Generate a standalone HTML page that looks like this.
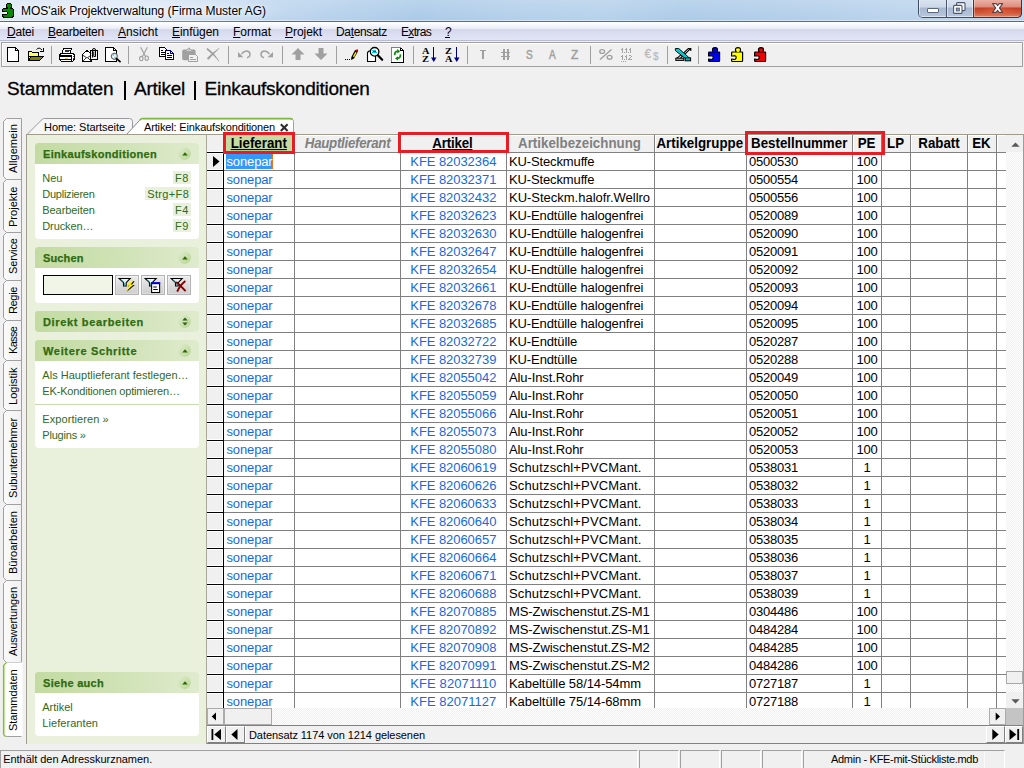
<!DOCTYPE html>
<html><head><meta charset="utf-8"><title>MOS'aik Projektverwaltung</title>
<style>
*{box-sizing:border-box;margin:0;padding:0}
html,body{width:1024px;height:768px;overflow:hidden;background:#f0f0f0;font-family:"Liberation Sans",sans-serif;}
#app{position:absolute;left:0;top:0;width:1024px;height:768px;overflow:hidden;background:#f0f0f0}
.a{position:absolute}
.t{position:absolute;white-space:pre;}
svg{position:absolute;overflow:visible}
u{text-decoration:underline;text-underline-offset:1px}
</style></head><body><div id="app">

<div class="a" style="left:0;top:0;width:1024px;height:21px;background:linear-gradient(90deg,#dde8f5 0px,#d3e2f3 100px,#c2d8ef 240px,#b6d1ec 330px,#aacae8 420px,#b3cfea 520px,#b5d1eb 600px,#accbe8 680px,#b2ceea 800px,#b9d3ec 900px,#bcd5ed 1024px)"></div>
<div class="a" style="left:0;top:0;width:1024px;height:21px;background:linear-gradient(180deg,rgba(255,255,255,.18) 0,rgba(255,255,255,0) 100%)"></div>
<div class="a" style="left:0;top:21px;width:1024px;height:1px;background:#5e6a7d"></div>
<div class="a" style="left:-10px;top:-6px;width:300px;height:34px;background:radial-gradient(ellipse 150px 17px at 50% 50%,rgba(255,255,255,.42) 0,rgba(255,255,255,.3) 50%,rgba(255,255,255,0) 100%)"></div>
<span class="t" style="left:21px;top:4.84px;font-size:12px;line-height:12px;color:#000;letter-spacing:-0.016px;text-shadow:0 0 3px rgba(255,255,255,.9),0 0 6px rgba(255,255,255,.7);">MOS'aik Projektverwaltung (Firma Muster AG)</span>
<div class="a" style="left:918px;top:-1px;width:104px;height:19px;border:1px solid #414d61;border-top:none;border-radius:0 0 5px 5px;overflow:hidden;background:#b9c9dd">
<div class="a" style="left:0;top:0;width:27px;height:18px;background:linear-gradient(180deg,#dbe4f0 0,#ccd8e8 8px,#a6b8d1 9px,#b7c7dc 18px);box-shadow:inset 1px -1px 0 0 rgba(255,255,255,.5)"></div>
<div class="a" style="left:27px;top:0;width:1px;height:18px;background:#4a566c"></div>
<div class="a" style="left:28px;top:0;width:26px;height:18px;background:linear-gradient(180deg,#dbe4f0 0,#ccd8e8 8px,#a6b8d1 9px,#b7c7dc 18px);box-shadow:inset 1px -1px 0 0 rgba(255,255,255,.5),inset -1px 0 0 0 rgba(255,255,255,.5)"></div>
<div class="a" style="left:54px;top:0;width:1px;height:18px;background:#5a2c2a"></div>
<div class="a" style="left:55px;top:0;width:48px;height:18px;background:linear-gradient(180deg,#ecb6aa 0,#de8c7c 8px,#c23e24 9px,#d0583a 14px,#dc8468 18px);box-shadow:inset 1px -1px 0 0 rgba(255,255,255,.35),inset -1px 0 0 0 rgba(255,255,255,.35)"></div>
<div class="a" style="left:55px;top:9px;width:48px;height:9px;background:radial-gradient(ellipse 18px 7px at 50% 40%,rgba(240,110,70,.55) 0,rgba(240,110,70,0) 100%)"></div>
</div>
<div class="a" style="left:973px;top:-1px;width:49px;height:19px;border:1px solid #5e2a26;border-top:none;border-radius:0 0 5px 0"></div>
<div class="a" style="left:927px;top:8px;width:12px;height:5px;background:#fff;border:1px solid #5b677c;border-radius:1px"></div>
<svg style="left:953px;top:2px" width="13" height="12" viewBox="0 0 13 12"><rect x="3.6" y="0.6" width="8.4" height="8" rx="1" fill="#f4f7fb" stroke="#4a566e" stroke-width="1.1"/><rect x="0.6" y="3.4" width="8.4" height="8" rx="1" fill="#fff" stroke="#4a566e" stroke-width="1.1"/><rect x="3.3" y="6.1" width="3" height="2.8" fill="#93a6c2" stroke="#4a566e" stroke-width=".9"/></svg>
<svg style="left:992px;top:3px" width="11.2" height="10" viewBox="0 0 13 10" preserveAspectRatio="none"><path d="M0.6 0.6 L4.8 0.6 L6.5 2.7 L8.2 0.6 L12.4 0.6 L8.7 5 L12.4 9.4 L8.2 9.4 L6.5 7.3 L4.8 9.4 L0.6 9.4 L4.3 5 Z" fill="#fff" stroke="#5d4346" stroke-width="1.2" stroke-linejoin="round"/></svg>
<svg style="left:2px;top:3px" width="12" height="15" viewBox="0 0 12 15" shape-rendering="crispEdges"><rect x="5" y="0" width="4" height="1" fill="#000"/><rect x="4" y="1" width="1" height="1" fill="#000"/><rect x="5" y="1" width="4" height="1" fill="#008a00"/><rect x="9" y="1" width="1" height="1" fill="#000"/><rect x="4" y="2" width="1" height="1" fill="#000"/><rect x="5" y="2" width="4" height="1" fill="#008a00"/><rect x="9" y="2" width="1" height="1" fill="#000"/><rect x="4" y="3" width="1" height="1" fill="#000"/><rect x="5" y="3" width="4" height="1" fill="#008a00"/><rect x="9" y="3" width="1" height="1" fill="#000"/><rect x="4" y="4" width="2" height="1" fill="#000"/><rect x="6" y="4" width="2" height="1" fill="#008a00"/><rect x="8" y="4" width="2" height="1" fill="#000"/><rect x="1" y="5" width="5" height="1" fill="#000"/><rect x="6" y="5" width="2" height="1" fill="#008a00"/><rect x="8" y="5" width="3" height="1" fill="#000"/><rect x="0" y="6" width="1" height="1" fill="#000"/><rect x="1" y="6" width="10" height="1" fill="#008a00"/><rect x="11" y="6" width="1" height="1" fill="#000"/><rect x="0" y="7" width="1" height="1" fill="#000"/><rect x="1" y="7" width="10" height="1" fill="#008a00"/><rect x="11" y="7" width="1" height="1" fill="#000"/><rect x="0" y="8" width="5" height="1" fill="#000"/><rect x="5" y="8" width="6" height="1" fill="#008a00"/><rect x="11" y="8" width="1" height="1" fill="#000"/><rect x="2" y="9" width="3" height="1" fill="#f4f8fc"/><rect x="5" y="9" width="1" height="1" fill="#000"/><rect x="6" y="9" width="5" height="1" fill="#008a00"/><rect x="11" y="9" width="1" height="1" fill="#000"/><rect x="2" y="10" width="3" height="1" fill="#f4f8fc"/><rect x="5" y="10" width="1" height="1" fill="#000"/><rect x="6" y="10" width="5" height="1" fill="#008a00"/><rect x="11" y="10" width="1" height="1" fill="#000"/><rect x="0" y="11" width="5" height="1" fill="#000"/><rect x="5" y="11" width="6" height="1" fill="#008a00"/><rect x="11" y="11" width="1" height="1" fill="#000"/><rect x="0" y="12" width="1" height="1" fill="#000"/><rect x="1" y="12" width="10" height="1" fill="#008a00"/><rect x="11" y="12" width="1" height="1" fill="#000"/><rect x="0" y="13" width="2" height="1" fill="#000"/><rect x="2" y="13" width="8" height="1" fill="#008a00"/><rect x="10" y="13" width="2" height="1" fill="#000"/><rect x="1" y="14" width="10" height="1" fill="#000"/></svg>
<div class="a" style="left:0;top:20px;width:1024px;height:1px;background:rgba(255,255,255,.45)"></div>
<div class="a" style="left:0;top:22px;width:1024px;height:7px;background:linear-gradient(180deg,#ffffff 0,#fafbfe 2px,#e9ebf6 7px)"></div>
<div class="a" style="left:0;top:29px;width:1024px;height:11px;background:linear-gradient(180deg,#d5d8ec 0,#e1e5f5 11px)"></div>
<div class="a" style="left:0;top:40px;width:1024px;height:1px;background:#b8bccf"></div>
<div class="a" style="left:0;top:41px;width:1024px;height:1px;background:#f0f0f0"></div>
<span class="t" style="left:7px;top:25.84px;font-size:12px;line-height:12px;color:#000;letter-spacing:-0.206px;"><u>D</u>atei</span>
<span class="t" style="left:48px;top:25.84px;font-size:12px;line-height:12px;color:#000;letter-spacing:-0.206px;"><u>B</u>earbeiten</span>
<span class="t" style="left:118px;top:25.84px;font-size:12px;line-height:12px;color:#000;letter-spacing:0.089px;"><u>A</u>nsicht</span>
<span class="t" style="left:172px;top:25.84px;font-size:12px;line-height:12px;color:#000;letter-spacing:-0.049px;"><u>E</u>infügen</span>
<span class="t" style="left:233px;top:25.84px;font-size:12px;line-height:12px;color:#000;letter-spacing:-0.005px;"><u>F</u>ormat</span>
<span class="t" style="left:285px;top:25.84px;font-size:12px;line-height:12px;color:#000;letter-spacing:-0.051px;"><u>P</u>rojekt</span>
<span class="t" style="left:336px;top:25.84px;font-size:12px;line-height:12px;color:#000;letter-spacing:-0.339px;">Da<u>t</u>ensatz</span>
<span class="t" style="left:401px;top:25.84px;font-size:12px;line-height:12px;color:#000;letter-spacing:-0.672px;">E<u>x</u>tras</span>
<span class="t" style="left:445px;top:25.84px;font-size:12px;line-height:12px;color:#000;letter-spacing:-1.688px;"><u>?</u></span>
<div class="a" style="left:1px;top:42px;width:1022px;height:25px;border:1px solid #a0a0a0;background:#f0f0f0"></div>
<div class="a" style="left:2px;top:43px;width:1020px;height:1px;background:#fff"></div>
<div class="a" style="left:2px;top:43px;width:1px;height:23px;background:#fff"></div>
<!--TOOLBAR_ICONS-->
<div class="a" style="left:51px;top:46px;width:1px;height:18px;background:#a0a0a0"></div>
<div class="a" style="left:128px;top:46px;width:1px;height:18px;background:#a0a0a0"></div>
<div class="a" style="left:228px;top:46px;width:1px;height:18px;background:#a0a0a0"></div>
<div class="a" style="left:282px;top:46px;width:1px;height:18px;background:#a0a0a0"></div>
<div class="a" style="left:336px;top:46px;width:1px;height:18px;background:#a0a0a0"></div>
<div class="a" style="left:413px;top:46px;width:1px;height:18px;background:#a0a0a0"></div>
<div class="a" style="left:467px;top:46px;width:1px;height:18px;background:#a0a0a0"></div>
<div class="a" style="left:590px;top:46px;width:1px;height:18px;background:#a0a0a0"></div>
<div class="a" style="left:667px;top:46px;width:1px;height:18px;background:#a0a0a0"></div>
<div class="a" style="left:698px;top:46px;width:1px;height:18px;background:#a0a0a0"></div>
<span class="t" style="left:7px;top:78.92px;font-size:19px;line-height:19px;color:#000;letter-spacing:-0.123px;-webkit-text-stroke:0.3px #000;">Stammdaten</span>
<div class="a" style="left:124px;top:81px;width:2px;height:19px;background:#000"></div>
<span class="t" style="left:134px;top:78.92px;font-size:19px;line-height:19px;color:#000;letter-spacing:-0.257px;-webkit-text-stroke:0.3px #000;">Artikel</span>
<div class="a" style="left:194px;top:81px;width:2px;height:19px;background:#000"></div>
<span class="t" style="left:204.6px;top:78.92px;font-size:19px;line-height:19px;color:#000;letter-spacing:-0.267px;-webkit-text-stroke:0.3px #000;">Einkaufskonditionen</span>
<svg style="left:0;top:0" width="30" height="768" viewBox="0 0 30 768"><defs><linearGradient id="vtg" x1="0" x2="1" y1="0" y2="0"><stop offset="0" stop-color="#fafafa"/><stop offset="1" stop-color="#f1f1f1"/></linearGradient></defs><path d="M6.5 118.5 H21.5 V179.5 H6.5 L3.5 176.5 V121.5 Z" fill="url(#vtg)" stroke="#a0a0a0" stroke-width="1"/><path d="M6.5 179.5 H21.5 V232.5 H6.5 L3.5 229.5 V182.5 Z" fill="url(#vtg)" stroke="#a0a0a0" stroke-width="1"/><path d="M6.5 232.5 H21.5 V280.5 H6.5 L3.5 277.5 V235.5 Z" fill="url(#vtg)" stroke="#a0a0a0" stroke-width="1"/><path d="M6.5 280.5 H21.5 V320.5 H6.5 L3.5 317.5 V283.5 Z" fill="url(#vtg)" stroke="#a0a0a0" stroke-width="1"/><path d="M6.5 320.5 H21.5 V360.5 H6.5 L3.5 357.5 V323.5 Z" fill="url(#vtg)" stroke="#a0a0a0" stroke-width="1"/><path d="M6.5 360.5 H21.5 V410.5 H6.5 L3.5 407.5 V363.5 Z" fill="url(#vtg)" stroke="#a0a0a0" stroke-width="1"/><path d="M6.5 410.5 H21.5 V504.5 H6.5 L3.5 501.5 V413.5 Z" fill="url(#vtg)" stroke="#a0a0a0" stroke-width="1"/><path d="M6.5 504.5 H21.5 V580.5 H6.5 L3.5 577.5 V507.5 Z" fill="url(#vtg)" stroke="#a0a0a0" stroke-width="1"/><path d="M6.5 580.5 H21.5 V662.5 H6.5 L3.5 659.5 V583.5 Z" fill="url(#vtg)" stroke="#a0a0a0" stroke-width="1"/><path d="M22.5 662.5 H6.5 L3.5 665.5 V734 Q3.5 736.5 6.5 736.5 H22.5 Z" fill="#fff" stroke="none"/><path d="M6.5 662.5 L3.5 665.5 V733.5 Q3.5 736 6.5 736.5" fill="none" stroke="#86bf3c" stroke-width="1.2"/><path d="M4.6 665 V734" fill="none" stroke="#c4e09c" stroke-width="1.2"/><path d="M6.5 736.5 H21.5" fill="none" stroke="#a0a0a0" stroke-width="1"/></svg>
<span class="t" style="left:7.7px;top:173px;font-size:11px;line-height:11px;color:#000;transform-origin:0 0;transform:rotate(-90deg);letter-spacing:0.076px;">Allgemein</span>
<span class="t" style="left:7.7px;top:226.5px;font-size:11px;line-height:11px;color:#000;transform-origin:0 0;transform:rotate(-90deg);letter-spacing:0.018px;">Projekte</span>
<span class="t" style="left:7.7px;top:274.3px;font-size:11px;line-height:11px;color:#000;transform-origin:0 0;transform:rotate(-90deg);letter-spacing:-0.127px;">Service</span>
<span class="t" style="left:7.7px;top:314px;font-size:11px;line-height:11px;color:#000;transform-origin:0 0;transform:rotate(-90deg);letter-spacing:-0.350px;">Regie</span>
<span class="t" style="left:7.7px;top:354.4px;font-size:11px;line-height:11px;color:#000;transform-origin:0 0;transform:rotate(-90deg);letter-spacing:-0.676px;">Kasse</span>
<span class="t" style="left:7.7px;top:405px;font-size:11px;line-height:11px;color:#000;transform-origin:0 0;transform:rotate(-90deg);letter-spacing:0.025px;">Logistik</span>
<span class="t" style="left:7.7px;top:498px;font-size:11px;line-height:11px;color:#000;transform-origin:0 0;transform:rotate(-90deg);letter-spacing:-0.140px;">Subunternehmer</span>
<span class="t" style="left:7.7px;top:574px;font-size:11px;line-height:11px;color:#000;transform-origin:0 0;transform:rotate(-90deg);letter-spacing:0.000px;">Büroarbeiten</span>
<span class="t" style="left:7.7px;top:656px;font-size:11px;line-height:11px;color:#000;transform-origin:0 0;transform:rotate(-90deg);letter-spacing:-0.111px;">Auswertungen</span>
<span class="t" style="left:7.7px;top:730.5px;font-size:11px;line-height:11px;color:#000;transform-origin:0 0;transform:rotate(-90deg);letter-spacing:-0.087px;">Stammdaten</span>
<div class="a" style="left:26px;top:134px;width:1px;height:610px;background:#a09d8e"></div>
<svg style="left:0;top:0" width="1024" height="140" viewBox="0 0 1024 140">
<path d="M27 134.5 L42.5 119 Q43 118.5 44.5 118.5 L129.5 118.5 Q132.5 118.5 132.5 121.5 L132.5 134.5 Z" fill="#f6f6f6" stroke="none"/>
<path d="M27 134.5 L42.5 119 Q43 118.5 44.5 118.5 L129.5 118.5 Q132.5 118.5 132.5 121.5 L132.5 128" fill="none" stroke="#9a9a9a" stroke-width="1"/>
<path d="M126.5 134.5 L140.5 119.5 Q141.5 118.5 143 118.5 L290 118.5 Q293.5 118.5 293.5 121.5 L293.5 134.5 Z" fill="#fff" stroke="none"/>
<path d="M143 119.5 H292.5" stroke="#cfe3b5" stroke-width="1"/>
<path d="M126.5 134.5 L139.5 120.5" fill="none" stroke="#8a8a8a" stroke-width="1"/>
<path d="M293.5 134 V121.5 Q293.5 119.6 291.8 118.9" fill="none" stroke="#a0a0a0" stroke-width="1"/>
<path d="M139.3 120.7 Q140.8 118.5 143 118.5 L290 118.5 Q292 118.5 292.6 119.4" fill="none" stroke="#7fb640" stroke-width="1.3"/>
<path d="M280.8 124.2 L287.6 131 M287.6 124.2 L280.8 131" stroke="#2c2c2c" stroke-width="2"/>
</svg>
<div class="a" style="left:26px;top:134px;width:998px;height:1px;background:#9f9c8c"></div>
<span class="t" style="left:44px;top:121.69px;font-size:11px;line-height:11px;color:#000;letter-spacing:-0.058px;">Home: Startseite</span>
<span class="t" style="left:144px;top:121.69px;font-size:11px;line-height:11px;color:#000;letter-spacing:-0.148px;">Artikel: Einkaufskonditionen</span>
<div class="a" style="left:27px;top:135px;width:180px;height:609px;background:#e9f1dd"></div>
<div class="a" style="left:35px;top:143px;width:164px;height:96px;background:#fff;border-radius:3px 3px 4px 4px"></div>
<div class="a" style="left:35px;top:143px;width:164px;height:21px;background:linear-gradient(90deg,#c3dba2 0,#cfe2b5 50%,#dfebcd 100%);border-radius:3px 3px 0 0"></div>
<span class="t" style="left:43px;top:149.19px;font-size:11px;line-height:11px;color:#2f6b12;font-weight:bold;letter-spacing:0.306px;-webkit-text-stroke:0.25px #2f6b12;">Einkaufskonditionen</span>
<div class="a" style="left:178.0px;top:147.0px;width:13px;height:13px;border-radius:50%;background:linear-gradient(135deg,#e0edd0 0,#cfe3b6 40%,#b7d493 100%)"></div>
<svg style="left:181.5px;top:151.5px" width="6" height="4" viewBox="0 0 6 4"><path d="M0.2 3.5 L3 0.2 L5.8 3.5 Z" fill="#2a6a00"/></svg>
<span class="t" style="left:42.3px;top:172.69px;font-size:11px;line-height:11px;color:#2f6a25;letter-spacing:-0.062px;">Neu</span>
<div class="a" style="left:173px;top:171px;width:18px;height:13px;background:#e9f1dd"></div>
<span class="t" style="left:175px;top:172.69px;font-size:11px;line-height:11px;color:#2f6a25;letter-spacing:0.578px;">F8</span>
<span class="t" style="left:42.3px;top:188.69px;font-size:11px;line-height:11px;color:#2f6a25;letter-spacing:-0.248px;">Duplizieren</span>
<div class="a" style="left:145px;top:187px;width:46px;height:13px;background:#e9f1dd"></div>
<span class="t" style="left:147.2px;top:188.69px;font-size:11px;line-height:11px;color:#2f6a25;letter-spacing:0.366px;">Strg+F8</span>
<span class="t" style="left:42.3px;top:204.69px;font-size:11px;line-height:11px;color:#2f6a25;letter-spacing:-0.072px;">Bearbeiten</span>
<div class="a" style="left:173px;top:203px;width:18px;height:13px;background:#e9f1dd"></div>
<span class="t" style="left:175px;top:204.69px;font-size:11px;line-height:11px;color:#2f6a25;letter-spacing:0.578px;">F4</span>
<span class="t" style="left:42.3px;top:220.69px;font-size:11px;line-height:11px;color:#2f6a25;letter-spacing:-0.121px;">Drucken…</span>
<div class="a" style="left:173px;top:219px;width:18px;height:13px;background:#e9f1dd"></div>
<span class="t" style="left:175px;top:220.69px;font-size:11px;line-height:11px;color:#2f6a25;letter-spacing:0.578px;">F9</span>
<div class="a" style="left:35px;top:247px;width:164px;height:56px;background:#fff;border-radius:3px 3px 4px 4px"></div>
<div class="a" style="left:35px;top:247px;width:164px;height:21px;background:linear-gradient(90deg,#c3dba2 0,#cfe2b5 50%,#dfebcd 100%);border-radius:3px 3px 0 0"></div>
<span class="t" style="left:43px;top:253.19px;font-size:11px;line-height:11px;color:#2f6b12;font-weight:bold;letter-spacing:0.128px;-webkit-text-stroke:0.25px #2f6b12;">Suchen</span>
<div class="a" style="left:178.0px;top:251.0px;width:13px;height:13px;border-radius:50%;background:linear-gradient(135deg,#e0edd0 0,#cfe3b6 40%,#b7d493 100%)"></div>
<svg style="left:181.5px;top:255.5px" width="6" height="4" viewBox="0 0 6 4"><path d="M0.2 3.5 L3 0.2 L5.8 3.5 Z" fill="#2a6a00"/></svg>
<div class="a" style="left:43px;top:275px;width:70px;height:20px;background:#f0f5e8;border:1px solid #000"></div>
<div class="a" style="left:115px;top:275px;width:24px;height:20px;background:linear-gradient(180deg,#ececec 0,#dcdcdc 50%,#cecece 100%);border:1px solid #b4b4b4;box-shadow:inset 0 0 0 1px rgba(255,255,255,.25)"></div>
<div class="a" style="left:141px;top:275px;width:24px;height:20px;background:linear-gradient(180deg,#ececec 0,#dcdcdc 50%,#cecece 100%);border:1px solid #b4b4b4;box-shadow:inset 0 0 0 1px rgba(255,255,255,.25)"></div>
<div class="a" style="left:167px;top:275px;width:24px;height:20px;background:linear-gradient(180deg,#ececec 0,#dcdcdc 50%,#cecece 100%);border:1px solid #b4b4b4;box-shadow:inset 0 0 0 1px rgba(255,255,255,.25)"></div>
<!--FILTER_ICONS-->
<div class="a" style="left:35px;top:311px;width:164px;height:21px;background:linear-gradient(90deg,#c3dba2 0,#cfe2b5 50%,#dfebcd 100%);border-radius:3px 3px 4px 4px"></div>
<span class="t" style="left:43px;top:317.19px;font-size:11px;line-height:11px;color:#2f6b12;font-weight:bold;letter-spacing:0.654px;-webkit-text-stroke:0.25px #2f6b12;">Direkt bearbeiten</span>
<div class="a" style="left:178.0px;top:315.0px;width:13px;height:13px;border-radius:50%;background:linear-gradient(135deg,#e0edd0 0,#cfe3b6 40%,#b7d493 100%)"></div>
<svg style="left:181.5px;top:317.0px" width="6" height="9" viewBox="0 0 6 9"><path d="M0.3 3.6 L3 0.6 L5.7 3.6 Z M0.3 5.4 L3 8.4 L5.7 5.4 Z" fill="#2e6314"/></svg>
<div class="a" style="left:35px;top:340px;width:164px;height:108px;background:#fff;border-radius:3px 3px 4px 4px"></div>
<div class="a" style="left:35px;top:340px;width:164px;height:21px;background:linear-gradient(90deg,#c3dba2 0,#cfe2b5 50%,#dfebcd 100%);border-radius:3px 3px 0 0"></div>
<span class="t" style="left:43px;top:346.19px;font-size:11px;line-height:11px;color:#2f6b12;font-weight:bold;letter-spacing:0.665px;-webkit-text-stroke:0.25px #2f6b12;">Weitere Schritte</span>
<div class="a" style="left:178.0px;top:344.0px;width:13px;height:13px;border-radius:50%;background:linear-gradient(135deg,#e0edd0 0,#cfe3b6 40%,#b7d493 100%)"></div>
<svg style="left:181.5px;top:348.5px" width="6" height="4" viewBox="0 0 6 4"><path d="M0.2 3.5 L3 0.2 L5.8 3.5 Z" fill="#2a6a00"/></svg>
<span class="t" style="left:42.3px;top:369.69px;font-size:11px;line-height:11px;color:#2f6a25;letter-spacing:0.027px;">Als Hauptlieferant festlegen…</span>
<span class="t" style="left:42.3px;top:385.69px;font-size:11px;line-height:11px;color:#2f6a25;letter-spacing:-0.168px;">EK-Konditionen optimieren…</span>
<div class="a" style="left:35px;top:404px;width:164px;height:1px;background:#c8ddb0"></div>
<span class="t" style="left:42.3px;top:413.69px;font-size:11px;line-height:11px;color:#2f6a25;letter-spacing:0.082px;">Exportieren »</span>
<span class="t" style="left:42.3px;top:429.69px;font-size:11px;line-height:11px;color:#2f6a25;letter-spacing:-0.196px;">Plugins »</span>
<div class="a" style="left:35px;top:672px;width:164px;height:64px;background:#fff;border-radius:3px 3px 4px 4px"></div>
<div class="a" style="left:35px;top:672px;width:164px;height:21px;background:linear-gradient(90deg,#c3dba2 0,#cfe2b5 50%,#dfebcd 100%);border-radius:3px 3px 0 0"></div>
<span class="t" style="left:43px;top:678.19px;font-size:11px;line-height:11px;color:#2f6b12;font-weight:bold;letter-spacing:0.292px;-webkit-text-stroke:0.25px #2f6b12;">Siehe auch</span>
<div class="a" style="left:178.0px;top:676.0px;width:13px;height:13px;border-radius:50%;background:linear-gradient(135deg,#e0edd0 0,#cfe3b6 40%,#b7d493 100%)"></div>
<svg style="left:181.5px;top:680.5px" width="6" height="4" viewBox="0 0 6 4"><path d="M0.2 3.5 L3 0.2 L5.8 3.5 Z" fill="#2a6a00"/></svg>
<span class="t" style="left:42.3px;top:701.69px;font-size:11px;line-height:11px;color:#2f6a25;letter-spacing:-0.009px;">Artikel</span>
<span class="t" style="left:42.3px;top:717.69px;font-size:11px;line-height:11px;color:#2f6a25;letter-spacing:0.059px;">Lieferanten</span>
<div class="a" style="left:206px;top:135px;width:1px;height:609px;background:#aca899"></div>
<div class="a" style="left:224px;top:153px;width:782px;height:555px;background:#fff"></div>
<div class="a" style="left:207px;top:135px;width:799px;height:17px;background:#f0f0f0"></div>
<div class="a" style="left:207px;top:153px;width:16px;height:555px;background:#f0f0f0"></div>
<div class="a" style="left:224px;top:152px;width:782px;height:1px;background:#808080"></div>
<div class="a" style="left:207px;top:152px;width:17px;height:1px;background:#000"></div>
<div class="a" style="left:224px;top:170px;width:782px;height:1px;background:#808080"></div>
<div class="a" style="left:207px;top:170px;width:17px;height:1px;background:#000"></div>
<div class="a" style="left:224px;top:188px;width:782px;height:1px;background:#808080"></div>
<div class="a" style="left:207px;top:188px;width:17px;height:1px;background:#000"></div>
<div class="a" style="left:224px;top:206px;width:782px;height:1px;background:#808080"></div>
<div class="a" style="left:207px;top:206px;width:17px;height:1px;background:#000"></div>
<div class="a" style="left:224px;top:224px;width:782px;height:1px;background:#808080"></div>
<div class="a" style="left:207px;top:224px;width:17px;height:1px;background:#000"></div>
<div class="a" style="left:224px;top:242px;width:782px;height:1px;background:#808080"></div>
<div class="a" style="left:207px;top:242px;width:17px;height:1px;background:#000"></div>
<div class="a" style="left:224px;top:260px;width:782px;height:1px;background:#808080"></div>
<div class="a" style="left:207px;top:260px;width:17px;height:1px;background:#000"></div>
<div class="a" style="left:224px;top:278px;width:782px;height:1px;background:#808080"></div>
<div class="a" style="left:207px;top:278px;width:17px;height:1px;background:#000"></div>
<div class="a" style="left:224px;top:296px;width:782px;height:1px;background:#808080"></div>
<div class="a" style="left:207px;top:296px;width:17px;height:1px;background:#000"></div>
<div class="a" style="left:224px;top:314px;width:782px;height:1px;background:#808080"></div>
<div class="a" style="left:207px;top:314px;width:17px;height:1px;background:#000"></div>
<div class="a" style="left:224px;top:332px;width:782px;height:1px;background:#808080"></div>
<div class="a" style="left:207px;top:332px;width:17px;height:1px;background:#000"></div>
<div class="a" style="left:224px;top:350px;width:782px;height:1px;background:#808080"></div>
<div class="a" style="left:207px;top:350px;width:17px;height:1px;background:#000"></div>
<div class="a" style="left:224px;top:368px;width:782px;height:1px;background:#808080"></div>
<div class="a" style="left:207px;top:368px;width:17px;height:1px;background:#000"></div>
<div class="a" style="left:224px;top:386px;width:782px;height:1px;background:#808080"></div>
<div class="a" style="left:207px;top:386px;width:17px;height:1px;background:#000"></div>
<div class="a" style="left:224px;top:404px;width:782px;height:1px;background:#808080"></div>
<div class="a" style="left:207px;top:404px;width:17px;height:1px;background:#000"></div>
<div class="a" style="left:224px;top:422px;width:782px;height:1px;background:#808080"></div>
<div class="a" style="left:207px;top:422px;width:17px;height:1px;background:#000"></div>
<div class="a" style="left:224px;top:440px;width:782px;height:1px;background:#808080"></div>
<div class="a" style="left:207px;top:440px;width:17px;height:1px;background:#000"></div>
<div class="a" style="left:224px;top:458px;width:782px;height:1px;background:#808080"></div>
<div class="a" style="left:207px;top:458px;width:17px;height:1px;background:#000"></div>
<div class="a" style="left:224px;top:476px;width:782px;height:1px;background:#808080"></div>
<div class="a" style="left:207px;top:476px;width:17px;height:1px;background:#000"></div>
<div class="a" style="left:224px;top:494px;width:782px;height:1px;background:#808080"></div>
<div class="a" style="left:207px;top:494px;width:17px;height:1px;background:#000"></div>
<div class="a" style="left:224px;top:512px;width:782px;height:1px;background:#808080"></div>
<div class="a" style="left:207px;top:512px;width:17px;height:1px;background:#000"></div>
<div class="a" style="left:224px;top:530px;width:782px;height:1px;background:#808080"></div>
<div class="a" style="left:207px;top:530px;width:17px;height:1px;background:#000"></div>
<div class="a" style="left:224px;top:548px;width:782px;height:1px;background:#808080"></div>
<div class="a" style="left:207px;top:548px;width:17px;height:1px;background:#000"></div>
<div class="a" style="left:224px;top:566px;width:782px;height:1px;background:#808080"></div>
<div class="a" style="left:207px;top:566px;width:17px;height:1px;background:#000"></div>
<div class="a" style="left:224px;top:584px;width:782px;height:1px;background:#808080"></div>
<div class="a" style="left:207px;top:584px;width:17px;height:1px;background:#000"></div>
<div class="a" style="left:224px;top:602px;width:782px;height:1px;background:#808080"></div>
<div class="a" style="left:207px;top:602px;width:17px;height:1px;background:#000"></div>
<div class="a" style="left:224px;top:620px;width:782px;height:1px;background:#808080"></div>
<div class="a" style="left:207px;top:620px;width:17px;height:1px;background:#000"></div>
<div class="a" style="left:224px;top:638px;width:782px;height:1px;background:#808080"></div>
<div class="a" style="left:207px;top:638px;width:17px;height:1px;background:#000"></div>
<div class="a" style="left:224px;top:656px;width:782px;height:1px;background:#808080"></div>
<div class="a" style="left:207px;top:656px;width:17px;height:1px;background:#000"></div>
<div class="a" style="left:224px;top:674px;width:782px;height:1px;background:#808080"></div>
<div class="a" style="left:207px;top:674px;width:17px;height:1px;background:#000"></div>
<div class="a" style="left:224px;top:692px;width:782px;height:1px;background:#808080"></div>
<div class="a" style="left:207px;top:692px;width:17px;height:1px;background:#000"></div>
<div class="a" style="left:294px;top:135px;width:1px;height:573px;background:#808080"></div>
<div class="a" style="left:400px;top:135px;width:1px;height:573px;background:#808080"></div>
<div class="a" style="left:506px;top:135px;width:1px;height:573px;background:#808080"></div>
<div class="a" style="left:654px;top:135px;width:1px;height:573px;background:#808080"></div>
<div class="a" style="left:746px;top:135px;width:1px;height:573px;background:#808080"></div>
<div class="a" style="left:852px;top:135px;width:1px;height:573px;background:#808080"></div>
<div class="a" style="left:881px;top:135px;width:1px;height:573px;background:#808080"></div>
<div class="a" style="left:910px;top:135px;width:1px;height:573px;background:#808080"></div>
<div class="a" style="left:967px;top:135px;width:1px;height:573px;background:#808080"></div>
<div class="a" style="left:996px;top:135px;width:1px;height:573px;background:#808080"></div>
<div class="a" style="left:223px;top:135px;width:1px;height:18px;background:#808080"></div>
<div class="a" style="left:223px;top:152px;width:1px;height:556px;background:#000"></div>
<div class="a" style="left:295px;top:135px;width:1px;height:17px;background:#fff"></div>
<div class="a" style="left:401px;top:135px;width:1px;height:17px;background:#fff"></div>
<div class="a" style="left:507px;top:135px;width:1px;height:17px;background:#fff"></div>
<div class="a" style="left:655px;top:135px;width:1px;height:17px;background:#fff"></div>
<div class="a" style="left:747px;top:135px;width:1px;height:17px;background:#fff"></div>
<div class="a" style="left:853px;top:135px;width:1px;height:17px;background:#fff"></div>
<div class="a" style="left:882px;top:135px;width:1px;height:17px;background:#fff"></div>
<div class="a" style="left:911px;top:135px;width:1px;height:17px;background:#fff"></div>
<div class="a" style="left:968px;top:135px;width:1px;height:17px;background:#fff"></div>
<div class="a" style="left:997px;top:135px;width:1px;height:17px;background:#fff"></div>
<div class="a" style="left:224px;top:135px;width:781px;height:1px;background:#fff"></div>
<div class="a" style="left:207px;top:151px;width:16px;height:1px;background:#fff"></div>
<div class="a" style="left:294px;top:135px;width:1px;height:1px;background:#808080"></div>
<div class="a" style="left:400px;top:135px;width:1px;height:1px;background:#808080"></div>
<div class="a" style="left:506px;top:135px;width:1px;height:1px;background:#808080"></div>
<div class="a" style="left:654px;top:135px;width:1px;height:1px;background:#808080"></div>
<div class="a" style="left:746px;top:135px;width:1px;height:1px;background:#808080"></div>
<div class="a" style="left:852px;top:135px;width:1px;height:1px;background:#808080"></div>
<div class="a" style="left:881px;top:135px;width:1px;height:1px;background:#808080"></div>
<div class="a" style="left:910px;top:135px;width:1px;height:1px;background:#808080"></div>
<div class="a" style="left:967px;top:135px;width:1px;height:1px;background:#808080"></div>
<div class="a" style="left:996px;top:135px;width:1px;height:1px;background:#808080"></div>
<div class="a" style="left:207px;top:153px;width:16px;height:1px;background:#fff"></div>
<div class="a" style="left:207px;top:169px;width:16px;height:1px;background:#fff"></div>
<div class="a" style="left:207px;top:171px;width:16px;height:1px;background:#fff"></div>
<div class="a" style="left:207px;top:187px;width:16px;height:1px;background:#fff"></div>
<div class="a" style="left:207px;top:189px;width:16px;height:1px;background:#fff"></div>
<div class="a" style="left:207px;top:205px;width:16px;height:1px;background:#fff"></div>
<div class="a" style="left:207px;top:207px;width:16px;height:1px;background:#fff"></div>
<div class="a" style="left:207px;top:223px;width:16px;height:1px;background:#fff"></div>
<div class="a" style="left:207px;top:225px;width:16px;height:1px;background:#fff"></div>
<div class="a" style="left:207px;top:241px;width:16px;height:1px;background:#fff"></div>
<div class="a" style="left:207px;top:243px;width:16px;height:1px;background:#fff"></div>
<div class="a" style="left:207px;top:259px;width:16px;height:1px;background:#fff"></div>
<div class="a" style="left:207px;top:261px;width:16px;height:1px;background:#fff"></div>
<div class="a" style="left:207px;top:277px;width:16px;height:1px;background:#fff"></div>
<div class="a" style="left:207px;top:279px;width:16px;height:1px;background:#fff"></div>
<div class="a" style="left:207px;top:295px;width:16px;height:1px;background:#fff"></div>
<div class="a" style="left:207px;top:297px;width:16px;height:1px;background:#fff"></div>
<div class="a" style="left:207px;top:313px;width:16px;height:1px;background:#fff"></div>
<div class="a" style="left:207px;top:315px;width:16px;height:1px;background:#fff"></div>
<div class="a" style="left:207px;top:331px;width:16px;height:1px;background:#fff"></div>
<div class="a" style="left:207px;top:333px;width:16px;height:1px;background:#fff"></div>
<div class="a" style="left:207px;top:349px;width:16px;height:1px;background:#fff"></div>
<div class="a" style="left:207px;top:351px;width:16px;height:1px;background:#fff"></div>
<div class="a" style="left:207px;top:367px;width:16px;height:1px;background:#fff"></div>
<div class="a" style="left:207px;top:369px;width:16px;height:1px;background:#fff"></div>
<div class="a" style="left:207px;top:385px;width:16px;height:1px;background:#fff"></div>
<div class="a" style="left:207px;top:387px;width:16px;height:1px;background:#fff"></div>
<div class="a" style="left:207px;top:403px;width:16px;height:1px;background:#fff"></div>
<div class="a" style="left:207px;top:405px;width:16px;height:1px;background:#fff"></div>
<div class="a" style="left:207px;top:421px;width:16px;height:1px;background:#fff"></div>
<div class="a" style="left:207px;top:423px;width:16px;height:1px;background:#fff"></div>
<div class="a" style="left:207px;top:439px;width:16px;height:1px;background:#fff"></div>
<div class="a" style="left:207px;top:441px;width:16px;height:1px;background:#fff"></div>
<div class="a" style="left:207px;top:457px;width:16px;height:1px;background:#fff"></div>
<div class="a" style="left:207px;top:459px;width:16px;height:1px;background:#fff"></div>
<div class="a" style="left:207px;top:475px;width:16px;height:1px;background:#fff"></div>
<div class="a" style="left:207px;top:477px;width:16px;height:1px;background:#fff"></div>
<div class="a" style="left:207px;top:493px;width:16px;height:1px;background:#fff"></div>
<div class="a" style="left:207px;top:495px;width:16px;height:1px;background:#fff"></div>
<div class="a" style="left:207px;top:511px;width:16px;height:1px;background:#fff"></div>
<div class="a" style="left:207px;top:513px;width:16px;height:1px;background:#fff"></div>
<div class="a" style="left:207px;top:529px;width:16px;height:1px;background:#fff"></div>
<div class="a" style="left:207px;top:531px;width:16px;height:1px;background:#fff"></div>
<div class="a" style="left:207px;top:547px;width:16px;height:1px;background:#fff"></div>
<div class="a" style="left:207px;top:549px;width:16px;height:1px;background:#fff"></div>
<div class="a" style="left:207px;top:565px;width:16px;height:1px;background:#fff"></div>
<div class="a" style="left:207px;top:567px;width:16px;height:1px;background:#fff"></div>
<div class="a" style="left:207px;top:583px;width:16px;height:1px;background:#fff"></div>
<div class="a" style="left:207px;top:585px;width:16px;height:1px;background:#fff"></div>
<div class="a" style="left:207px;top:601px;width:16px;height:1px;background:#fff"></div>
<div class="a" style="left:207px;top:603px;width:16px;height:1px;background:#fff"></div>
<div class="a" style="left:207px;top:619px;width:16px;height:1px;background:#fff"></div>
<div class="a" style="left:207px;top:621px;width:16px;height:1px;background:#fff"></div>
<div class="a" style="left:207px;top:637px;width:16px;height:1px;background:#fff"></div>
<div class="a" style="left:207px;top:639px;width:16px;height:1px;background:#fff"></div>
<div class="a" style="left:207px;top:655px;width:16px;height:1px;background:#fff"></div>
<div class="a" style="left:207px;top:657px;width:16px;height:1px;background:#fff"></div>
<div class="a" style="left:207px;top:673px;width:16px;height:1px;background:#fff"></div>
<div class="a" style="left:207px;top:675px;width:16px;height:1px;background:#fff"></div>
<div class="a" style="left:207px;top:691px;width:16px;height:1px;background:#fff"></div>
<div class="a" style="left:207px;top:693px;width:16px;height:1px;background:#fff"></div>
<div class="a" style="left:207px;top:709px;width:16px;height:1px;background:#fff"></div>
<div class="a" style="left:222px;top:153px;width:1px;height:17px;background:#fff"></div>
<div class="a" style="left:222px;top:171px;width:1px;height:17px;background:#fff"></div>
<div class="a" style="left:222px;top:189px;width:1px;height:17px;background:#fff"></div>
<div class="a" style="left:222px;top:207px;width:1px;height:17px;background:#fff"></div>
<div class="a" style="left:222px;top:225px;width:1px;height:17px;background:#fff"></div>
<div class="a" style="left:222px;top:243px;width:1px;height:17px;background:#fff"></div>
<div class="a" style="left:222px;top:261px;width:1px;height:17px;background:#fff"></div>
<div class="a" style="left:222px;top:279px;width:1px;height:17px;background:#fff"></div>
<div class="a" style="left:222px;top:297px;width:1px;height:17px;background:#fff"></div>
<div class="a" style="left:222px;top:315px;width:1px;height:17px;background:#fff"></div>
<div class="a" style="left:222px;top:333px;width:1px;height:17px;background:#fff"></div>
<div class="a" style="left:222px;top:351px;width:1px;height:17px;background:#fff"></div>
<div class="a" style="left:222px;top:369px;width:1px;height:17px;background:#fff"></div>
<div class="a" style="left:222px;top:387px;width:1px;height:17px;background:#fff"></div>
<div class="a" style="left:222px;top:405px;width:1px;height:17px;background:#fff"></div>
<div class="a" style="left:222px;top:423px;width:1px;height:17px;background:#fff"></div>
<div class="a" style="left:222px;top:441px;width:1px;height:17px;background:#fff"></div>
<div class="a" style="left:222px;top:459px;width:1px;height:17px;background:#fff"></div>
<div class="a" style="left:222px;top:477px;width:1px;height:17px;background:#fff"></div>
<div class="a" style="left:222px;top:495px;width:1px;height:17px;background:#fff"></div>
<div class="a" style="left:222px;top:513px;width:1px;height:17px;background:#fff"></div>
<div class="a" style="left:222px;top:531px;width:1px;height:17px;background:#fff"></div>
<div class="a" style="left:222px;top:549px;width:1px;height:17px;background:#fff"></div>
<div class="a" style="left:222px;top:567px;width:1px;height:17px;background:#fff"></div>
<div class="a" style="left:222px;top:585px;width:1px;height:17px;background:#fff"></div>
<div class="a" style="left:222px;top:603px;width:1px;height:17px;background:#fff"></div>
<div class="a" style="left:222px;top:621px;width:1px;height:17px;background:#fff"></div>
<div class="a" style="left:222px;top:639px;width:1px;height:17px;background:#fff"></div>
<div class="a" style="left:222px;top:657px;width:1px;height:17px;background:#fff"></div>
<div class="a" style="left:222px;top:675px;width:1px;height:17px;background:#fff"></div>
<div class="a" style="left:222px;top:693px;width:1px;height:17px;background:#fff"></div>
<div class="a" style="left:224px;top:135px;width:70px;height:17px;background:#c5dba1"></div>
<span class="t" style="left:158.8px;width:200px;text-align:center;top:136.71px;font-size:13.333px;line-height:13.333px;font-weight:bold;color:#000;letter-spacing:0px;transform:scaleY(1.05);transform-origin:0 11.3px;text-decoration:underline;text-underline-offset:1px;text-decoration-thickness:1px;">Lieferant</span>
<span class="t" style="left:247.60000000000002px;width:200px;text-align:center;top:136.71px;font-size:13.333px;line-height:13.333px;font-weight:bold;color:#808080;letter-spacing:-0.29px;transform:scaleY(1.05);transform-origin:0 11.3px;font-style:italic;">Hauptlieferant</span>
<span class="t" style="left:352.4px;width:200px;text-align:center;top:136.71px;font-size:13.333px;line-height:13.333px;font-weight:bold;color:#000;letter-spacing:-0.18px;transform:scaleY(1.05);transform-origin:0 11.3px;text-decoration:underline;text-underline-offset:1px;text-decoration-thickness:1px;">Artikel</span>
<span class="t" style="left:479.5px;width:200px;text-align:center;top:136.71px;font-size:13.333px;line-height:13.333px;font-weight:bold;color:#808080;letter-spacing:0px;transform:scaleY(1.05);transform-origin:0 11.3px;">Artikelbezeichnung</span>
<span class="t" style="left:599.8px;width:200px;text-align:center;top:136.71px;font-size:13.333px;line-height:13.333px;font-weight:bold;color:#000;letter-spacing:0px;transform:scaleY(1.05);transform-origin:0 11.3px;">Artikelgruppe</span>
<span class="t" style="left:699.2px;width:200px;text-align:center;top:136.71px;font-size:13.333px;line-height:13.333px;font-weight:bold;color:#000;letter-spacing:0px;transform:scaleY(1.05);transform-origin:0 11.3px;">Bestellnummer</span>
<span class="t" style="left:766.6px;width:200px;text-align:center;top:136.71px;font-size:13.333px;line-height:13.333px;font-weight:bold;color:#000;letter-spacing:0px;transform:scaleY(1.05);transform-origin:0 11.3px;">PE</span>
<span class="t" style="left:795.6px;width:200px;text-align:center;top:136.71px;font-size:13.333px;line-height:13.333px;font-weight:bold;color:#000;letter-spacing:0px;transform:scaleY(1.05);transform-origin:0 11.3px;">LP</span>
<span class="t" style="left:839.0px;width:200px;text-align:center;top:136.71px;font-size:13.333px;line-height:13.333px;font-weight:bold;color:#000;letter-spacing:0px;transform:scaleY(1.05);transform-origin:0 11.3px;">Rabatt</span>
<span class="t" style="left:881.5px;width:200px;text-align:center;top:136.71px;font-size:13.333px;line-height:13.333px;font-weight:bold;color:#000;letter-spacing:0px;transform:scaleY(1.05);transform-origin:0 11.3px;">EK</span>
<div class="a" style="left:223px;top:132px;width:72px;height:22px;border:3px solid #e81c24"></div>
<div class="a" style="left:398px;top:132px;width:111px;height:21px;border:3px solid #e81c24"></div>
<div class="a" style="left:745px;top:131px;width:140px;height:24px;border:3px solid #e81c24"></div>
<div class="a" style="left:207px;top:153px;width:799px;height:555px;overflow:hidden">
<div class="a" style="left:19px;top:1px;width:46px;height:15px;background:#3399ff"></div>
<div class="a" style="left:65px;top:1px;width:1px;height:15px;background:#e07820"></div>
<span class="t" style="left:19.50px;top:1.50px;font-size:13px;line-height:13px;color:#fff;letter-spacing:-0.141px;transform:scaleY(1.035);transform-origin:0 11px">sonepar</span>
<span class="t" style="left:203.30px;top:1.50px;font-size:13px;line-height:13px;color:#146bd9;letter-spacing:-0.061px;transform:scaleY(1.035);transform-origin:0 11px">KFE 82032364</span>
<span class="t" style="left:302.00px;top:1.50px;font-size:13px;line-height:13px;color:#000;letter-spacing:-0.133px;transform:scaleY(1.035);transform-origin:0 11px">KU-Steckmuffe</span>
<span class="t" style="left:542.00px;top:1.50px;font-size:13px;line-height:13px;color:#000;letter-spacing:-0.232px;transform:scaleY(1.035);transform-origin:0 11px">0500530</span>
<span class="t" style="left:649.40px;top:1.50px;font-size:13px;line-height:13px;color:#000;letter-spacing:-0.234px;transform:scaleY(1.035);transform-origin:0 11px">100</span>
<span class="t" style="left:19.50px;top:19.50px;font-size:13px;line-height:13px;color:#146bd9;letter-spacing:-0.141px;transform:scaleY(1.035);transform-origin:0 11px">sonepar</span>
<span class="t" style="left:203.30px;top:19.50px;font-size:13px;line-height:13px;color:#146bd9;letter-spacing:-0.061px;transform:scaleY(1.035);transform-origin:0 11px">KFE 82032371</span>
<span class="t" style="left:302.00px;top:19.50px;font-size:13px;line-height:13px;color:#000;letter-spacing:-0.133px;transform:scaleY(1.035);transform-origin:0 11px">KU-Steckmuffe</span>
<span class="t" style="left:542.00px;top:19.50px;font-size:13px;line-height:13px;color:#000;letter-spacing:-0.232px;transform:scaleY(1.035);transform-origin:0 11px">0500554</span>
<span class="t" style="left:649.40px;top:19.50px;font-size:13px;line-height:13px;color:#000;letter-spacing:-0.234px;transform:scaleY(1.035);transform-origin:0 11px">100</span>
<span class="t" style="left:19.50px;top:37.50px;font-size:13px;line-height:13px;color:#146bd9;letter-spacing:-0.141px;transform:scaleY(1.035);transform-origin:0 11px">sonepar</span>
<span class="t" style="left:203.30px;top:37.50px;font-size:13px;line-height:13px;color:#146bd9;letter-spacing:-0.061px;transform:scaleY(1.035);transform-origin:0 11px">KFE 82032432</span>
<span class="t" style="left:302.00px;top:37.50px;font-size:13px;line-height:13px;color:#000;letter-spacing:-0.014px;transform:scaleY(1.035);transform-origin:0 11px">KU-Steckm.halofr.Wellro</span>
<span class="t" style="left:542.00px;top:37.50px;font-size:13px;line-height:13px;color:#000;letter-spacing:-0.232px;transform:scaleY(1.035);transform-origin:0 11px">0500556</span>
<span class="t" style="left:649.40px;top:37.50px;font-size:13px;line-height:13px;color:#000;letter-spacing:-0.234px;transform:scaleY(1.035);transform-origin:0 11px">100</span>
<span class="t" style="left:19.50px;top:55.50px;font-size:13px;line-height:13px;color:#146bd9;letter-spacing:-0.141px;transform:scaleY(1.035);transform-origin:0 11px">sonepar</span>
<span class="t" style="left:203.30px;top:55.50px;font-size:13px;line-height:13px;color:#146bd9;letter-spacing:-0.061px;transform:scaleY(1.035);transform-origin:0 11px">KFE 82032623</span>
<span class="t" style="left:302.00px;top:55.50px;font-size:13px;line-height:13px;color:#000;letter-spacing:-0.128px;transform:scaleY(1.035);transform-origin:0 11px">KU-Endtülle halogenfrei</span>
<span class="t" style="left:542.00px;top:55.50px;font-size:13px;line-height:13px;color:#000;letter-spacing:-0.232px;transform:scaleY(1.035);transform-origin:0 11px">0520089</span>
<span class="t" style="left:649.40px;top:55.50px;font-size:13px;line-height:13px;color:#000;letter-spacing:-0.234px;transform:scaleY(1.035);transform-origin:0 11px">100</span>
<span class="t" style="left:19.50px;top:73.50px;font-size:13px;line-height:13px;color:#146bd9;letter-spacing:-0.141px;transform:scaleY(1.035);transform-origin:0 11px">sonepar</span>
<span class="t" style="left:203.30px;top:73.50px;font-size:13px;line-height:13px;color:#146bd9;letter-spacing:-0.061px;transform:scaleY(1.035);transform-origin:0 11px">KFE 82032630</span>
<span class="t" style="left:302.00px;top:73.50px;font-size:13px;line-height:13px;color:#000;letter-spacing:-0.128px;transform:scaleY(1.035);transform-origin:0 11px">KU-Endtülle halogenfrei</span>
<span class="t" style="left:542.00px;top:73.50px;font-size:13px;line-height:13px;color:#000;letter-spacing:-0.232px;transform:scaleY(1.035);transform-origin:0 11px">0520090</span>
<span class="t" style="left:649.40px;top:73.50px;font-size:13px;line-height:13px;color:#000;letter-spacing:-0.234px;transform:scaleY(1.035);transform-origin:0 11px">100</span>
<span class="t" style="left:19.50px;top:91.50px;font-size:13px;line-height:13px;color:#146bd9;letter-spacing:-0.141px;transform:scaleY(1.035);transform-origin:0 11px">sonepar</span>
<span class="t" style="left:203.30px;top:91.50px;font-size:13px;line-height:13px;color:#146bd9;letter-spacing:-0.061px;transform:scaleY(1.035);transform-origin:0 11px">KFE 82032647</span>
<span class="t" style="left:302.00px;top:91.50px;font-size:13px;line-height:13px;color:#000;letter-spacing:-0.128px;transform:scaleY(1.035);transform-origin:0 11px">KU-Endtülle halogenfrei</span>
<span class="t" style="left:542.00px;top:91.50px;font-size:13px;line-height:13px;color:#000;letter-spacing:-0.232px;transform:scaleY(1.035);transform-origin:0 11px">0520091</span>
<span class="t" style="left:649.40px;top:91.50px;font-size:13px;line-height:13px;color:#000;letter-spacing:-0.234px;transform:scaleY(1.035);transform-origin:0 11px">100</span>
<span class="t" style="left:19.50px;top:109.50px;font-size:13px;line-height:13px;color:#146bd9;letter-spacing:-0.141px;transform:scaleY(1.035);transform-origin:0 11px">sonepar</span>
<span class="t" style="left:203.30px;top:109.50px;font-size:13px;line-height:13px;color:#146bd9;letter-spacing:-0.061px;transform:scaleY(1.035);transform-origin:0 11px">KFE 82032654</span>
<span class="t" style="left:302.00px;top:109.50px;font-size:13px;line-height:13px;color:#000;letter-spacing:-0.128px;transform:scaleY(1.035);transform-origin:0 11px">KU-Endtülle halogenfrei</span>
<span class="t" style="left:542.00px;top:109.50px;font-size:13px;line-height:13px;color:#000;letter-spacing:-0.232px;transform:scaleY(1.035);transform-origin:0 11px">0520092</span>
<span class="t" style="left:649.40px;top:109.50px;font-size:13px;line-height:13px;color:#000;letter-spacing:-0.234px;transform:scaleY(1.035);transform-origin:0 11px">100</span>
<span class="t" style="left:19.50px;top:127.50px;font-size:13px;line-height:13px;color:#146bd9;letter-spacing:-0.141px;transform:scaleY(1.035);transform-origin:0 11px">sonepar</span>
<span class="t" style="left:203.30px;top:127.50px;font-size:13px;line-height:13px;color:#146bd9;letter-spacing:-0.061px;transform:scaleY(1.035);transform-origin:0 11px">KFE 82032661</span>
<span class="t" style="left:302.00px;top:127.50px;font-size:13px;line-height:13px;color:#000;letter-spacing:-0.128px;transform:scaleY(1.035);transform-origin:0 11px">KU-Endtülle halogenfrei</span>
<span class="t" style="left:542.00px;top:127.50px;font-size:13px;line-height:13px;color:#000;letter-spacing:-0.232px;transform:scaleY(1.035);transform-origin:0 11px">0520093</span>
<span class="t" style="left:649.40px;top:127.50px;font-size:13px;line-height:13px;color:#000;letter-spacing:-0.234px;transform:scaleY(1.035);transform-origin:0 11px">100</span>
<span class="t" style="left:19.50px;top:145.50px;font-size:13px;line-height:13px;color:#146bd9;letter-spacing:-0.141px;transform:scaleY(1.035);transform-origin:0 11px">sonepar</span>
<span class="t" style="left:203.30px;top:145.50px;font-size:13px;line-height:13px;color:#146bd9;letter-spacing:-0.061px;transform:scaleY(1.035);transform-origin:0 11px">KFE 82032678</span>
<span class="t" style="left:302.00px;top:145.50px;font-size:13px;line-height:13px;color:#000;letter-spacing:-0.128px;transform:scaleY(1.035);transform-origin:0 11px">KU-Endtülle halogenfrei</span>
<span class="t" style="left:542.00px;top:145.50px;font-size:13px;line-height:13px;color:#000;letter-spacing:-0.232px;transform:scaleY(1.035);transform-origin:0 11px">0520094</span>
<span class="t" style="left:649.40px;top:145.50px;font-size:13px;line-height:13px;color:#000;letter-spacing:-0.234px;transform:scaleY(1.035);transform-origin:0 11px">100</span>
<span class="t" style="left:19.50px;top:163.50px;font-size:13px;line-height:13px;color:#146bd9;letter-spacing:-0.141px;transform:scaleY(1.035);transform-origin:0 11px">sonepar</span>
<span class="t" style="left:203.30px;top:163.50px;font-size:13px;line-height:13px;color:#146bd9;letter-spacing:-0.061px;transform:scaleY(1.035);transform-origin:0 11px">KFE 82032685</span>
<span class="t" style="left:302.00px;top:163.50px;font-size:13px;line-height:13px;color:#000;letter-spacing:-0.128px;transform:scaleY(1.035);transform-origin:0 11px">KU-Endtülle halogenfrei</span>
<span class="t" style="left:542.00px;top:163.50px;font-size:13px;line-height:13px;color:#000;letter-spacing:-0.232px;transform:scaleY(1.035);transform-origin:0 11px">0520095</span>
<span class="t" style="left:649.40px;top:163.50px;font-size:13px;line-height:13px;color:#000;letter-spacing:-0.234px;transform:scaleY(1.035);transform-origin:0 11px">100</span>
<span class="t" style="left:19.50px;top:181.50px;font-size:13px;line-height:13px;color:#146bd9;letter-spacing:-0.141px;transform:scaleY(1.035);transform-origin:0 11px">sonepar</span>
<span class="t" style="left:203.30px;top:181.50px;font-size:13px;line-height:13px;color:#146bd9;letter-spacing:-0.061px;transform:scaleY(1.035);transform-origin:0 11px">KFE 82032722</span>
<span class="t" style="left:302.00px;top:181.50px;font-size:13px;line-height:13px;color:#000;letter-spacing:-0.108px;transform:scaleY(1.035);transform-origin:0 11px">KU-Endtülle</span>
<span class="t" style="left:542.00px;top:181.50px;font-size:13px;line-height:13px;color:#000;letter-spacing:-0.232px;transform:scaleY(1.035);transform-origin:0 11px">0520287</span>
<span class="t" style="left:649.40px;top:181.50px;font-size:13px;line-height:13px;color:#000;letter-spacing:-0.234px;transform:scaleY(1.035);transform-origin:0 11px">100</span>
<span class="t" style="left:19.50px;top:199.50px;font-size:13px;line-height:13px;color:#146bd9;letter-spacing:-0.141px;transform:scaleY(1.035);transform-origin:0 11px">sonepar</span>
<span class="t" style="left:203.30px;top:199.50px;font-size:13px;line-height:13px;color:#146bd9;letter-spacing:-0.061px;transform:scaleY(1.035);transform-origin:0 11px">KFE 82032739</span>
<span class="t" style="left:302.00px;top:199.50px;font-size:13px;line-height:13px;color:#000;letter-spacing:-0.108px;transform:scaleY(1.035);transform-origin:0 11px">KU-Endtülle</span>
<span class="t" style="left:542.00px;top:199.50px;font-size:13px;line-height:13px;color:#000;letter-spacing:-0.232px;transform:scaleY(1.035);transform-origin:0 11px">0520288</span>
<span class="t" style="left:649.40px;top:199.50px;font-size:13px;line-height:13px;color:#000;letter-spacing:-0.234px;transform:scaleY(1.035);transform-origin:0 11px">100</span>
<span class="t" style="left:19.50px;top:217.50px;font-size:13px;line-height:13px;color:#146bd9;letter-spacing:-0.141px;transform:scaleY(1.035);transform-origin:0 11px">sonepar</span>
<span class="t" style="left:203.30px;top:217.50px;font-size:13px;line-height:13px;color:#146bd9;letter-spacing:-0.061px;transform:scaleY(1.035);transform-origin:0 11px">KFE 82055042</span>
<span class="t" style="left:302.00px;top:217.50px;font-size:13px;line-height:13px;color:#000;letter-spacing:-0.103px;transform:scaleY(1.035);transform-origin:0 11px">Alu-Inst.Rohr</span>
<span class="t" style="left:542.00px;top:217.50px;font-size:13px;line-height:13px;color:#000;letter-spacing:-0.232px;transform:scaleY(1.035);transform-origin:0 11px">0520049</span>
<span class="t" style="left:649.40px;top:217.50px;font-size:13px;line-height:13px;color:#000;letter-spacing:-0.234px;transform:scaleY(1.035);transform-origin:0 11px">100</span>
<span class="t" style="left:19.50px;top:235.50px;font-size:13px;line-height:13px;color:#146bd9;letter-spacing:-0.141px;transform:scaleY(1.035);transform-origin:0 11px">sonepar</span>
<span class="t" style="left:203.30px;top:235.50px;font-size:13px;line-height:13px;color:#146bd9;letter-spacing:-0.061px;transform:scaleY(1.035);transform-origin:0 11px">KFE 82055059</span>
<span class="t" style="left:302.00px;top:235.50px;font-size:13px;line-height:13px;color:#000;letter-spacing:-0.103px;transform:scaleY(1.035);transform-origin:0 11px">Alu-Inst.Rohr</span>
<span class="t" style="left:542.00px;top:235.50px;font-size:13px;line-height:13px;color:#000;letter-spacing:-0.232px;transform:scaleY(1.035);transform-origin:0 11px">0520050</span>
<span class="t" style="left:649.40px;top:235.50px;font-size:13px;line-height:13px;color:#000;letter-spacing:-0.234px;transform:scaleY(1.035);transform-origin:0 11px">100</span>
<span class="t" style="left:19.50px;top:253.50px;font-size:13px;line-height:13px;color:#146bd9;letter-spacing:-0.141px;transform:scaleY(1.035);transform-origin:0 11px">sonepar</span>
<span class="t" style="left:203.30px;top:253.50px;font-size:13px;line-height:13px;color:#146bd9;letter-spacing:-0.061px;transform:scaleY(1.035);transform-origin:0 11px">KFE 82055066</span>
<span class="t" style="left:302.00px;top:253.50px;font-size:13px;line-height:13px;color:#000;letter-spacing:-0.103px;transform:scaleY(1.035);transform-origin:0 11px">Alu-Inst.Rohr</span>
<span class="t" style="left:542.00px;top:253.50px;font-size:13px;line-height:13px;color:#000;letter-spacing:-0.232px;transform:scaleY(1.035);transform-origin:0 11px">0520051</span>
<span class="t" style="left:649.40px;top:253.50px;font-size:13px;line-height:13px;color:#000;letter-spacing:-0.234px;transform:scaleY(1.035);transform-origin:0 11px">100</span>
<span class="t" style="left:19.50px;top:271.50px;font-size:13px;line-height:13px;color:#146bd9;letter-spacing:-0.141px;transform:scaleY(1.035);transform-origin:0 11px">sonepar</span>
<span class="t" style="left:203.30px;top:271.50px;font-size:13px;line-height:13px;color:#146bd9;letter-spacing:-0.061px;transform:scaleY(1.035);transform-origin:0 11px">KFE 82055073</span>
<span class="t" style="left:302.00px;top:271.50px;font-size:13px;line-height:13px;color:#000;letter-spacing:-0.103px;transform:scaleY(1.035);transform-origin:0 11px">Alu-Inst.Rohr</span>
<span class="t" style="left:542.00px;top:271.50px;font-size:13px;line-height:13px;color:#000;letter-spacing:-0.232px;transform:scaleY(1.035);transform-origin:0 11px">0520052</span>
<span class="t" style="left:649.40px;top:271.50px;font-size:13px;line-height:13px;color:#000;letter-spacing:-0.234px;transform:scaleY(1.035);transform-origin:0 11px">100</span>
<span class="t" style="left:19.50px;top:289.50px;font-size:13px;line-height:13px;color:#146bd9;letter-spacing:-0.141px;transform:scaleY(1.035);transform-origin:0 11px">sonepar</span>
<span class="t" style="left:203.30px;top:289.50px;font-size:13px;line-height:13px;color:#146bd9;letter-spacing:-0.061px;transform:scaleY(1.035);transform-origin:0 11px">KFE 82055080</span>
<span class="t" style="left:302.00px;top:289.50px;font-size:13px;line-height:13px;color:#000;letter-spacing:-0.103px;transform:scaleY(1.035);transform-origin:0 11px">Alu-Inst.Rohr</span>
<span class="t" style="left:542.00px;top:289.50px;font-size:13px;line-height:13px;color:#000;letter-spacing:-0.232px;transform:scaleY(1.035);transform-origin:0 11px">0520053</span>
<span class="t" style="left:649.40px;top:289.50px;font-size:13px;line-height:13px;color:#000;letter-spacing:-0.234px;transform:scaleY(1.035);transform-origin:0 11px">100</span>
<span class="t" style="left:19.50px;top:307.50px;font-size:13px;line-height:13px;color:#146bd9;letter-spacing:-0.141px;transform:scaleY(1.035);transform-origin:0 11px">sonepar</span>
<span class="t" style="left:203.30px;top:307.50px;font-size:13px;line-height:13px;color:#146bd9;letter-spacing:-0.061px;transform:scaleY(1.035);transform-origin:0 11px">KFE 82060619</span>
<span class="t" style="left:302.00px;top:307.50px;font-size:13px;line-height:13px;color:#000;letter-spacing:0.150px;transform:scaleY(1.035);transform-origin:0 11px">Schutzschl+PVCMant.</span>
<span class="t" style="left:542.00px;top:307.50px;font-size:13px;line-height:13px;color:#000;letter-spacing:-0.232px;transform:scaleY(1.035);transform-origin:0 11px">0538031</span>
<span class="t" style="left:656.40px;top:307.50px;font-size:13px;line-height:13px;color:#000;letter-spacing:-0.234px;transform:scaleY(1.035);transform-origin:0 11px">1</span>
<span class="t" style="left:19.50px;top:325.50px;font-size:13px;line-height:13px;color:#146bd9;letter-spacing:-0.141px;transform:scaleY(1.035);transform-origin:0 11px">sonepar</span>
<span class="t" style="left:203.30px;top:325.50px;font-size:13px;line-height:13px;color:#146bd9;letter-spacing:-0.061px;transform:scaleY(1.035);transform-origin:0 11px">KFE 82060626</span>
<span class="t" style="left:302.00px;top:325.50px;font-size:13px;line-height:13px;color:#000;letter-spacing:0.150px;transform:scaleY(1.035);transform-origin:0 11px">Schutzschl+PVCMant.</span>
<span class="t" style="left:542.00px;top:325.50px;font-size:13px;line-height:13px;color:#000;letter-spacing:-0.232px;transform:scaleY(1.035);transform-origin:0 11px">0538032</span>
<span class="t" style="left:656.40px;top:325.50px;font-size:13px;line-height:13px;color:#000;letter-spacing:-0.234px;transform:scaleY(1.035);transform-origin:0 11px">1</span>
<span class="t" style="left:19.50px;top:343.50px;font-size:13px;line-height:13px;color:#146bd9;letter-spacing:-0.141px;transform:scaleY(1.035);transform-origin:0 11px">sonepar</span>
<span class="t" style="left:203.30px;top:343.50px;font-size:13px;line-height:13px;color:#146bd9;letter-spacing:-0.061px;transform:scaleY(1.035);transform-origin:0 11px">KFE 82060633</span>
<span class="t" style="left:302.00px;top:343.50px;font-size:13px;line-height:13px;color:#000;letter-spacing:0.150px;transform:scaleY(1.035);transform-origin:0 11px">Schutzschl+PVCMant.</span>
<span class="t" style="left:542.00px;top:343.50px;font-size:13px;line-height:13px;color:#000;letter-spacing:-0.232px;transform:scaleY(1.035);transform-origin:0 11px">0538033</span>
<span class="t" style="left:656.40px;top:343.50px;font-size:13px;line-height:13px;color:#000;letter-spacing:-0.234px;transform:scaleY(1.035);transform-origin:0 11px">1</span>
<span class="t" style="left:19.50px;top:361.50px;font-size:13px;line-height:13px;color:#146bd9;letter-spacing:-0.141px;transform:scaleY(1.035);transform-origin:0 11px">sonepar</span>
<span class="t" style="left:203.30px;top:361.50px;font-size:13px;line-height:13px;color:#146bd9;letter-spacing:-0.061px;transform:scaleY(1.035);transform-origin:0 11px">KFE 82060640</span>
<span class="t" style="left:302.00px;top:361.50px;font-size:13px;line-height:13px;color:#000;letter-spacing:0.150px;transform:scaleY(1.035);transform-origin:0 11px">Schutzschl+PVCMant.</span>
<span class="t" style="left:542.00px;top:361.50px;font-size:13px;line-height:13px;color:#000;letter-spacing:-0.232px;transform:scaleY(1.035);transform-origin:0 11px">0538034</span>
<span class="t" style="left:656.40px;top:361.50px;font-size:13px;line-height:13px;color:#000;letter-spacing:-0.234px;transform:scaleY(1.035);transform-origin:0 11px">1</span>
<span class="t" style="left:19.50px;top:379.50px;font-size:13px;line-height:13px;color:#146bd9;letter-spacing:-0.141px;transform:scaleY(1.035);transform-origin:0 11px">sonepar</span>
<span class="t" style="left:203.30px;top:379.50px;font-size:13px;line-height:13px;color:#146bd9;letter-spacing:-0.061px;transform:scaleY(1.035);transform-origin:0 11px">KFE 82060657</span>
<span class="t" style="left:302.00px;top:379.50px;font-size:13px;line-height:13px;color:#000;letter-spacing:0.150px;transform:scaleY(1.035);transform-origin:0 11px">Schutzschl+PVCMant.</span>
<span class="t" style="left:542.00px;top:379.50px;font-size:13px;line-height:13px;color:#000;letter-spacing:-0.232px;transform:scaleY(1.035);transform-origin:0 11px">0538035</span>
<span class="t" style="left:656.40px;top:379.50px;font-size:13px;line-height:13px;color:#000;letter-spacing:-0.234px;transform:scaleY(1.035);transform-origin:0 11px">1</span>
<span class="t" style="left:19.50px;top:397.50px;font-size:13px;line-height:13px;color:#146bd9;letter-spacing:-0.141px;transform:scaleY(1.035);transform-origin:0 11px">sonepar</span>
<span class="t" style="left:203.30px;top:397.50px;font-size:13px;line-height:13px;color:#146bd9;letter-spacing:-0.061px;transform:scaleY(1.035);transform-origin:0 11px">KFE 82060664</span>
<span class="t" style="left:302.00px;top:397.50px;font-size:13px;line-height:13px;color:#000;letter-spacing:0.150px;transform:scaleY(1.035);transform-origin:0 11px">Schutzschl+PVCMant.</span>
<span class="t" style="left:542.00px;top:397.50px;font-size:13px;line-height:13px;color:#000;letter-spacing:-0.232px;transform:scaleY(1.035);transform-origin:0 11px">0538036</span>
<span class="t" style="left:656.40px;top:397.50px;font-size:13px;line-height:13px;color:#000;letter-spacing:-0.234px;transform:scaleY(1.035);transform-origin:0 11px">1</span>
<span class="t" style="left:19.50px;top:415.50px;font-size:13px;line-height:13px;color:#146bd9;letter-spacing:-0.141px;transform:scaleY(1.035);transform-origin:0 11px">sonepar</span>
<span class="t" style="left:203.30px;top:415.50px;font-size:13px;line-height:13px;color:#146bd9;letter-spacing:-0.061px;transform:scaleY(1.035);transform-origin:0 11px">KFE 82060671</span>
<span class="t" style="left:302.00px;top:415.50px;font-size:13px;line-height:13px;color:#000;letter-spacing:0.150px;transform:scaleY(1.035);transform-origin:0 11px">Schutzschl+PVCMant.</span>
<span class="t" style="left:542.00px;top:415.50px;font-size:13px;line-height:13px;color:#000;letter-spacing:-0.232px;transform:scaleY(1.035);transform-origin:0 11px">0538037</span>
<span class="t" style="left:656.40px;top:415.50px;font-size:13px;line-height:13px;color:#000;letter-spacing:-0.234px;transform:scaleY(1.035);transform-origin:0 11px">1</span>
<span class="t" style="left:19.50px;top:433.50px;font-size:13px;line-height:13px;color:#146bd9;letter-spacing:-0.141px;transform:scaleY(1.035);transform-origin:0 11px">sonepar</span>
<span class="t" style="left:203.30px;top:433.50px;font-size:13px;line-height:13px;color:#146bd9;letter-spacing:-0.061px;transform:scaleY(1.035);transform-origin:0 11px">KFE 82060688</span>
<span class="t" style="left:302.00px;top:433.50px;font-size:13px;line-height:13px;color:#000;letter-spacing:0.150px;transform:scaleY(1.035);transform-origin:0 11px">Schutzschl+PVCMant.</span>
<span class="t" style="left:542.00px;top:433.50px;font-size:13px;line-height:13px;color:#000;letter-spacing:-0.232px;transform:scaleY(1.035);transform-origin:0 11px">0538039</span>
<span class="t" style="left:656.40px;top:433.50px;font-size:13px;line-height:13px;color:#000;letter-spacing:-0.234px;transform:scaleY(1.035);transform-origin:0 11px">1</span>
<span class="t" style="left:19.50px;top:451.50px;font-size:13px;line-height:13px;color:#146bd9;letter-spacing:-0.141px;transform:scaleY(1.035);transform-origin:0 11px">sonepar</span>
<span class="t" style="left:203.30px;top:451.50px;font-size:13px;line-height:13px;color:#146bd9;letter-spacing:-0.061px;transform:scaleY(1.035);transform-origin:0 11px">KFE 82070885</span>
<span class="t" style="left:302.00px;top:451.50px;font-size:13px;line-height:13px;color:#000;letter-spacing:-0.073px;transform:scaleY(1.035);transform-origin:0 11px">MS-Zwischenstut.ZS-M1</span>
<span class="t" style="left:542.00px;top:451.50px;font-size:13px;line-height:13px;color:#000;letter-spacing:-0.232px;transform:scaleY(1.035);transform-origin:0 11px">0304486</span>
<span class="t" style="left:649.40px;top:451.50px;font-size:13px;line-height:13px;color:#000;letter-spacing:-0.234px;transform:scaleY(1.035);transform-origin:0 11px">100</span>
<span class="t" style="left:19.50px;top:469.50px;font-size:13px;line-height:13px;color:#146bd9;letter-spacing:-0.141px;transform:scaleY(1.035);transform-origin:0 11px">sonepar</span>
<span class="t" style="left:203.30px;top:469.50px;font-size:13px;line-height:13px;color:#146bd9;letter-spacing:-0.061px;transform:scaleY(1.035);transform-origin:0 11px">KFE 82070892</span>
<span class="t" style="left:302.00px;top:469.50px;font-size:13px;line-height:13px;color:#000;letter-spacing:-0.073px;transform:scaleY(1.035);transform-origin:0 11px">MS-Zwischenstut.ZS-M1</span>
<span class="t" style="left:542.00px;top:469.50px;font-size:13px;line-height:13px;color:#000;letter-spacing:-0.232px;transform:scaleY(1.035);transform-origin:0 11px">0484284</span>
<span class="t" style="left:649.40px;top:469.50px;font-size:13px;line-height:13px;color:#000;letter-spacing:-0.234px;transform:scaleY(1.035);transform-origin:0 11px">100</span>
<span class="t" style="left:19.50px;top:487.50px;font-size:13px;line-height:13px;color:#146bd9;letter-spacing:-0.141px;transform:scaleY(1.035);transform-origin:0 11px">sonepar</span>
<span class="t" style="left:203.30px;top:487.50px;font-size:13px;line-height:13px;color:#146bd9;letter-spacing:-0.061px;transform:scaleY(1.035);transform-origin:0 11px">KFE 82070908</span>
<span class="t" style="left:302.00px;top:487.50px;font-size:13px;line-height:13px;color:#000;letter-spacing:-0.076px;transform:scaleY(1.035);transform-origin:0 11px">MS-Zwischenstut.ZS-M2</span>
<span class="t" style="left:542.00px;top:487.50px;font-size:13px;line-height:13px;color:#000;letter-spacing:-0.232px;transform:scaleY(1.035);transform-origin:0 11px">0484285</span>
<span class="t" style="left:649.40px;top:487.50px;font-size:13px;line-height:13px;color:#000;letter-spacing:-0.234px;transform:scaleY(1.035);transform-origin:0 11px">100</span>
<span class="t" style="left:19.50px;top:505.50px;font-size:13px;line-height:13px;color:#146bd9;letter-spacing:-0.141px;transform:scaleY(1.035);transform-origin:0 11px">sonepar</span>
<span class="t" style="left:203.30px;top:505.50px;font-size:13px;line-height:13px;color:#146bd9;letter-spacing:-0.061px;transform:scaleY(1.035);transform-origin:0 11px">KFE 82070991</span>
<span class="t" style="left:302.00px;top:505.50px;font-size:13px;line-height:13px;color:#000;letter-spacing:-0.076px;transform:scaleY(1.035);transform-origin:0 11px">MS-Zwischenstut.ZS-M2</span>
<span class="t" style="left:542.00px;top:505.50px;font-size:13px;line-height:13px;color:#000;letter-spacing:-0.232px;transform:scaleY(1.035);transform-origin:0 11px">0484286</span>
<span class="t" style="left:649.40px;top:505.50px;font-size:13px;line-height:13px;color:#000;letter-spacing:-0.234px;transform:scaleY(1.035);transform-origin:0 11px">100</span>
<span class="t" style="left:19.50px;top:523.50px;font-size:13px;line-height:13px;color:#146bd9;letter-spacing:-0.141px;transform:scaleY(1.035);transform-origin:0 11px">sonepar</span>
<span class="t" style="left:203.30px;top:523.50px;font-size:13px;line-height:13px;color:#146bd9;letter-spacing:0.099px;transform:scaleY(1.035);transform-origin:0 11px">KFE 82071110</span>
<span class="t" style="left:302.00px;top:523.50px;font-size:13px;line-height:13px;color:#000;letter-spacing:-0.080px;transform:scaleY(1.035);transform-origin:0 11px">Kabeltülle 58/14-54mm</span>
<span class="t" style="left:542.00px;top:523.50px;font-size:13px;line-height:13px;color:#000;letter-spacing:-0.232px;transform:scaleY(1.035);transform-origin:0 11px">0727187</span>
<span class="t" style="left:656.40px;top:523.50px;font-size:13px;line-height:13px;color:#000;letter-spacing:-0.234px;transform:scaleY(1.035);transform-origin:0 11px">1</span>
<span class="t" style="left:19.50px;top:541.50px;font-size:13px;line-height:13px;color:#146bd9;letter-spacing:-0.141px;transform:scaleY(1.035);transform-origin:0 11px">sonepar</span>
<span class="t" style="left:203.30px;top:541.50px;font-size:13px;line-height:13px;color:#146bd9;letter-spacing:0.018px;transform:scaleY(1.035);transform-origin:0 11px">KFE 82071127</span>
<span class="t" style="left:302.00px;top:541.50px;font-size:13px;line-height:13px;color:#000;letter-spacing:-0.080px;transform:scaleY(1.035);transform-origin:0 11px">Kabeltülle 75/14-68mm</span>
<span class="t" style="left:542.00px;top:541.50px;font-size:13px;line-height:13px;color:#000;letter-spacing:-0.232px;transform:scaleY(1.035);transform-origin:0 11px">0727188</span>
<span class="t" style="left:656.40px;top:541.50px;font-size:13px;line-height:13px;color:#000;letter-spacing:-0.234px;transform:scaleY(1.035);transform-origin:0 11px">1</span>
</div>
<svg style="left:213px;top:156px" width="7" height="11" viewBox="0 0 7 11"><path d="M0 0 L6.5 5.5 L0 11 Z" fill="#000"/></svg>
<div class="a" style="left:1023px;top:134px;width:1px;height:610px;background:#a09d8c"></div>
<div class="a" style="left:1006px;top:135px;width:17px;height:573px;background-image:repeating-conic-gradient(#ffffff 0 25%,#f0f0f0 0 50%);background-size:2px 2px"></div>
<div class="a" style="left:1006px;top:135px;width:17px;height:17px;background:#f0f0f0"></div>
<svg style="left:1011px;top:141.5px" width="9" height="5" viewBox="0 0 9 5"><path d="M0.3 4.8 L4.5 0.4 L8.7 4.8 Z" fill="#585858"/></svg>
<div class="a" style="left:1006px;top:671px;width:17px;height:13px;background:#f0f0f0;border:1px solid #a8a8a8"></div>
<div class="a" style="left:1006px;top:692px;width:17px;height:16px;background:#f0f0f0"></div>
<svg style="left:1011px;top:698.5px" width="9" height="5" viewBox="0 0 9 5"><path d="M0.3 0.3 L8.7 0.3 L4.5 4.6 Z" fill="#585858"/></svg>
<div class="a" style="left:207px;top:708px;width:799px;height:17px;background-image:repeating-conic-gradient(#ffffff 0 25%,#f0f0f0 0 50%);background-size:2px 2px"></div>
<div class="a" style="left:207px;top:708px;width:17px;height:17px;background:#f0f0f0;border:1px solid #acacac"></div>
<svg style="left:211.2px;top:712px" width="6" height="9" viewBox="0 0 6 9"><path d="M5 0.5 L0.7 4.5 L5 8.5 Z" fill="#000"/></svg>
<div class="a" style="left:224px;top:708px;width:48px;height:17px;background:#f0f0f0;border:1px solid #acacac"></div>
<div class="a" style="left:989px;top:708px;width:17px;height:17px;background:#f0f0f0;border:1px solid #acacac"></div>
<svg style="left:995.4px;top:712px" width="6" height="9" viewBox="0 0 6 9"><path d="M0.7 0.5 L5 4.5 L0.7 8.5 Z" fill="#000"/></svg>
<div class="a" style="left:1006px;top:708px;width:17px;height:17px;background:#c4c4c4"></div>
<div class="a" style="left:207px;top:725px;width:816px;height:1px;background:#808080"></div>
<div class="a" style="left:207px;top:726px;width:816px;height:18px;background:#f0f0f0;border-bottom:1px solid #808080"></div>
<div class="a" style="left:207px;top:726px;width:19px;height:17px;background:#f0f0f0;border-top:1px solid #fff;border-left:1px solid #fff;border-right:1px solid #808080;border-bottom:1px solid #808080"></div>
<div class="a" style="left:226px;top:726px;width:19px;height:17px;background:#f0f0f0;border-top:1px solid #fff;border-left:1px solid #fff;border-right:1px solid #808080;border-bottom:1px solid #808080"></div>
<div class="a" style="left:986px;top:726px;width:19px;height:17px;background:#f0f0f0;border-top:1px solid #fff;border-left:1px solid #fff;border-right:1px solid #808080;border-bottom:1px solid #808080"></div>
<div class="a" style="left:1005px;top:726px;width:18px;height:17px;background:#f0f0f0;border-top:1px solid #fff;border-left:1px solid #fff;border-right:1px solid #808080;border-bottom:1px solid #808080"></div>
<div class="a" style="left:245px;top:726px;width:1px;height:17px;background:#fff"></div>
<svg style="left:211px;top:729px" width="11" height="11" viewBox="0 0 11 11"><rect x="0.5" y="0" width="1.8" height="11" fill="#000"/><path d="M10 0 L3.2 5.5 L10 11 Z" fill="#000"/></svg>
<svg style="left:231px;top:729px" width="7" height="11" viewBox="0 0 7 11"><path d="M6.5 0 L0.3 5.5 L6.5 11 Z" fill="#000"/></svg>
<svg style="left:992px;top:729px" width="7" height="11" viewBox="0 0 7 11"><path d="M0.3 0 L6.7 5.5 L0.3 11 Z" fill="#000"/></svg>
<svg style="left:1009px;top:729px" width="11" height="11" viewBox="0 0 11 11"><path d="M0.5 0 L7.3 5.5 L0.5 11 Z" fill="#000"/><rect x="8.3" y="0" width="1.8" height="11" fill="#000"/></svg>
<span class="t" style="left:249px;top:729.69px;font-size:11px;line-height:11px;color:#000;letter-spacing:-0.072px;">Datensatz 1174 von 1214 gelesenen</span>
<div class="a" style="left:0px;top:750px;width:638px;height:18px;border-top:1px solid #a0a0a0;border-left:1px solid #a0a0a0;border-right:1px solid #fff;"></div>
<div class="a" style="left:639px;top:750px;width:40px;height:18px;border-top:1px solid #a0a0a0;border-left:1px solid #a0a0a0;border-right:1px solid #fff;"></div>
<div class="a" style="left:680px;top:750px;width:40px;height:18px;border-top:1px solid #a0a0a0;border-left:1px solid #a0a0a0;border-right:1px solid #fff;"></div>
<div class="a" style="left:721px;top:750px;width:40px;height:18px;border-top:1px solid #a0a0a0;border-left:1px solid #a0a0a0;border-right:1px solid #fff;"></div>
<div class="a" style="left:762px;top:750px;width:40px;height:18px;border-top:1px solid #a0a0a0;border-left:1px solid #a0a0a0;border-right:1px solid #fff;"></div>
<div class="a" style="left:803px;top:750px;width:202px;height:18px;border-top:1px solid #a0a0a0;border-left:1px solid #a0a0a0;border-right:1px solid #fff;"></div>
<div class="a" style="left:984px;top:751px;width:1px;height:17px;background:#fafafa"></div>
<span class="t" style="left:3.2px;top:754.09px;font-size:11px;line-height:11px;color:#000;letter-spacing:-0.029px;">Enthält den Adresskurznamen.</span>
<span class="t" style="left:831px;top:754.09px;font-size:11px;line-height:11px;color:#000;letter-spacing:-0.296px;">Admin - KFE-mit-Stückliste.mdb</span>
<svg style="left:7px;top:47px" width="12" height="15" viewBox="0 0 12 15" shape-rendering="crispEdges"><path d="M0.5 0.5 H8.5 L11.5 3.5 V14.5 H0.5 Z" fill="#fff" stroke="#000"/><path d="M8.5 0.5 V3.5 H11.5" fill="none" stroke="#000"/></svg>
<svg style="left:28px;top:47px" width="17" height="14" viewBox="0 0 17 14" shape-rendering="crispEdges"><path d="M0.5 4.5 H3.5 L4.5 5.5 H10.5 V9 H0.5 Z" fill="#ffff66" stroke="#000"/><path d="M3 9.5 H15.5 L11.5 13.5 H0.5 Z" fill="#808000" stroke="#000"/><path d="M0.5 9 V13.5" stroke="#000"/><path d="M8.5 2.5 Q11 -0.5 14 3" fill="none" stroke="#000" shape-rendering="auto"/><path d="M12 4.5 H15.5 V1" fill="none" stroke="#000"/></svg>
<svg style="left:59px;top:48px" width="17" height="14" viewBox="0 0 17 14" shape-rendering="crispEdges"><path d="M4.5 0.5 H12.5 L11 5 H3 Z" fill="#fff" stroke="#000"/><path d="M6 2.5 H11 M5.5 3.5 H10" stroke="#000" stroke-width=".8"/><path d="M0.5 6.5 L2.5 5.5 H13.5 L15.5 6.5 V11 L13.5 13.5 H2.5 L0.5 11.5 Z" fill="#fff" stroke="#000"/><path d="M1 7.5 H12 M1 8.5 H12 M1 11.5 H12.5 M12.5 7 V13" stroke="#000"/><rect x="6" y="9.5" width="3" height="1" fill="#e8d800"/><path d="M13.5 8 L15 7 M13.5 10 L15 9" stroke="#000" stroke-width=".7"/></svg>
<svg style="left:82px;top:48px" width="17" height="14" viewBox="0 0 17 14" shape-rendering="crispEdges"><path d="M0.5 6.5 L5 2.5 L9.5 6.5 V13.5 H0.5 Z" fill="#fff" stroke="#000"/><path d="M0.5 7 L5 10 L9.5 7 M0.5 13.5 L4 10 M9.5 13.5 L6 10" fill="none" stroke="#000" stroke-width=".8" shape-rendering="auto"/><rect x="8.5" y="2.5" width="7" height="9" fill="#f4f4f4" stroke="#000"/><path d="M10.5 9.5 V2 Q10.5 0.5 12 0.5 Q13.5 0.5 13.5 2 V8.5 H11.8 V3.5" fill="none" stroke="#000" shape-rendering="auto"/><path d="M9.5 3 V9 M12.6 3 V7.5" stroke="#e8d800" stroke-dasharray="1 1"/></svg>
<svg style="left:105px;top:47px" width="17" height="15" viewBox="0 0 17 15" shape-rendering="crispEdges"><path d="M0.5 0.5 H8.5 L11.5 3.5 V14.5 H0.5 Z" fill="#fff" stroke="#000"/><path d="M8.5 0.5 V3.5 H11.5" fill="none" stroke="#000"/><circle cx="9.3" cy="9.3" r="3" fill="#e8fbff" stroke="#707070" stroke-width="1.2" shape-rendering="auto"/><path d="M8 8.5 L9 7.6 M9.6 10.8 L10.6 10" stroke="#00d8f0" stroke-width="1.2" shape-rendering="auto"/><path d="M11.6 11.6 L15 14.6" stroke="#000" stroke-width="1.8" stroke-linecap="round" shape-rendering="auto"/></svg>
<svg style="left:139px;top:47px" width="10" height="15" viewBox="0 0 10 15"><path d="M1.6 0.3 L6.6 9.6 M8.4 0.3 L3.4 9.6" stroke="#a0a0a0" stroke-width="1.15" fill="none"/><ellipse cx="2.3" cy="11.6" rx="1.7" ry="2.2" fill="none" stroke="#a0a0a0" stroke-width="1.1"/><ellipse cx="7.7" cy="11.2" rx="1.7" ry="2.2" fill="none" stroke="#a0a0a0" stroke-width="1.1"/></svg>
<svg style="left:159px;top:47px" width="16" height="14" viewBox="0 0 16 14" shape-rendering="crispEdges"><path d="M0.5 0.5 H5.5 L8.5 3.5 V9.5 H0.5 Z" fill="#fff" stroke="#000"/><path d="M2 3.5 H4 M2 5.5 H6 M2 7.5 H6" stroke="#000"/><path d="M6.5 3.5 H11.5 L14.5 6.5 V12.5 H6.5 Z" fill="#fff" stroke="#000080"/><path d="M11.5 3.5 V6.5 H14.5" fill="none" stroke="#000080"/><path d="M8 6.5 H10 M8 8.5 H13 M8 10.5 H13" stroke="#000"/></svg>
<svg style="left:182px;top:48px" width="17" height="14" viewBox="0 0 17 14"><rect x="0.2" y="1.4" width="13.4" height="10.8" rx="1.6" fill="#a0a0a0"/><path d="M3.6 3.4 L6.9 -0.2 L10.2 3.4 Z" fill="#f0f0f0" stroke="#a0a0a0" stroke-width="1"/><path d="M5.8 1.9 H8" stroke="#a0a0a0" stroke-width="1"/><path d="M6.5 6.5 H13.5 L15.5 8.5 V13.5 H6.5 Z" fill="#f0f0f0" stroke="#a0a0a0" stroke-width="1"/><path d="M8 9.5 H11 M8 11.5 H14" stroke="#a0a0a0" stroke-width="1"/></svg>
<svg style="left:206px;top:48px" width="14" height="14" viewBox="0 0 14 14"><path d="M0.3 1.2 L1.6 0 L7.6 5.2 L12.6 12 L12.2 12.4 L6.4 6.4 Z" fill="#a0a0a0"/><path d="M13 0 L13.3 0.4 L7.6 6.2 L2.4 11.8 L0.8 10.2 L6.4 5 Z" fill="#a0a0a0"/><rect x="12" y="12.3" width="1" height="1" fill="#a0a0a0"/></svg>
<svg style="left:238px;top:50px" width="13" height="9" viewBox="0 0 13 9"><path d="M3.5 4 Q6 0.8 9 1 Q12 1.5 12 4.5 Q12 7 9 7.8" fill="none" stroke="#a0a0a0" stroke-width="1.4"/><path d="M0 2 V7.2 H5.4 Z" fill="#a0a0a0"/></svg>
<svg style="left:260px;top:50px" width="13" height="9" viewBox="0 0 13 9"><path d="M9.5 4 Q7 0.8 4 1 Q1 1.5 1 4.5 Q1 7 4 7.8" fill="none" stroke="#a0a0a0" stroke-width="1.4"/><path d="M13 2 V7.2 H7.6 Z" fill="#a0a0a0"/></svg>
<svg style="left:291px;top:48px" width="14" height="12" viewBox="0 0 14 12"><path d="M7 0 L13.5 6.5 H9.5 V12 H4.5 V6.5 H0.5 Z" fill="#a0a0a0"/></svg>
<svg style="left:314px;top:48px" width="14" height="12" viewBox="0 0 14 12"><path d="M7 12 L13.5 5.5 H9.5 V0 H4.5 V5.5 H0.5 Z" fill="#a0a0a0"/></svg>
<svg style="left:345px;top:49px" width="14" height="12" viewBox="0 0 14 12" shape-rendering="crispEdges"><rect x="0" y="10" width="1" height="1" fill="#000"/><rect x="2" y="10" width="1" height="1" fill="#000"/><rect x="4" y="10" width="1" height="1" fill="#000"/><path d="M6 11 L6.4 8 L10 1 L13 0.4 L12.6 3 L9 9.6 Z" fill="#000" shape-rendering="auto"/><path d="M7.9 7.6 L10.3 2.9 L11.6 3.5 L9.1 8.3 Z" fill="#ffee00" shape-rendering="auto"/><path d="M10.4 0.9 L12.5 0.8 L12.2 2 L10.1 2.1 Z" fill="#e00000" shape-rendering="auto"/></svg>
<svg style="left:367px;top:47px" width="17" height="15" viewBox="0 0 17 15" shape-rendering="crispEdges"><path d="M0.5 5.5 L2 4 H8.5 V14.5 H0.5 Z" fill="#fff" stroke="#000" stroke-width="1.1" shape-rendering="auto"/><circle cx="7.6" cy="4.8" r="4.3" fill="#fff" stroke="#000" stroke-width="1.3" shape-rendering="auto"/><path d="M4.8 3.8 H9.4 M5.4 5.8 H9.8" stroke="#00d0e8" stroke-width="1.1"/><path d="M6.4 4.8 H8.6" stroke="#000" stroke-width=".8"/><path d="M10.8 8.2 L15.2 12.8" stroke="#000" stroke-width="2.2" stroke-linecap="round" shape-rendering="auto"/></svg>
<svg style="left:391px;top:47px" width="14" height="16" viewBox="0 0 14 16" shape-rendering="crispEdges"><path d="M0.5 0.5 H9.5 L12.5 3.5 V15.2 H0.5 Z" fill="#fff" stroke="#000"/><path d="M0.5 15 V0.5 H9.5" fill="none" stroke="#808080"/><path d="M9.5 0.5 V3.5 H12.5" fill="none" stroke="#000"/><path d="M3.8 8.2 Q3.4 4.6 6.8 4.2 M9.4 7.4 Q9.8 11 6.4 11.4" fill="none" stroke="#0a8a0a" stroke-width="1.7" shape-rendering="auto"/><path d="M6.2 2 L9.2 4.2 L6.2 6.4 Z M7 9.2 L4 11.4 L7 13.6 Z" fill="#0a8a0a" shape-rendering="auto"/></svg>
<span class="t" style="left:421.5px;top:46.5px;font-size:9px;line-height:8px;font-weight:bold;color:#000;font-family:'Liberation Serif',serif;transform:scaleX(1.15);transform-origin:0 0">A</span>
<span class="t" style="left:421.5px;top:54.5px;font-size:9px;line-height:8px;font-weight:bold;color:#000;font-family:'Liberation Serif',serif;transform:scaleX(1.15);transform-origin:0 0">Z</span>
<svg style="left:430.5px;top:47px" width="6" height="15" viewBox="0 0 6 15" shape-rendering="crispEdges"><path d="M2.5 0 V11" stroke="#000080"/><path d="M0 10.5 H5.5 L2.75 15 Z" fill="#000080" shape-rendering="auto"/></svg>
<span class="t" style="left:444.5px;top:46.5px;font-size:9px;line-height:8px;font-weight:bold;color:#000;font-family:'Liberation Serif',serif;transform:scaleX(1.15);transform-origin:0 0">Z</span>
<span class="t" style="left:444.5px;top:54.5px;font-size:9px;line-height:8px;font-weight:bold;color:#000;font-family:'Liberation Serif',serif;transform:scaleX(1.15);transform-origin:0 0">A</span>
<svg style="left:453.5px;top:47px" width="6" height="15" viewBox="0 0 6 15" shape-rendering="crispEdges"><path d="M2.5 0 V11" stroke="#000080"/><path d="M0 10.5 H5.5 L2.75 15 Z" fill="#000080" shape-rendering="auto"/></svg>
<svg style="left:480px;top:50px" width="7" height="9" viewBox="0 0 7 9" shape-rendering="crispEdges"><rect x="0" y="0" width="6" height="1.2" fill="#a0a0a0"/><rect x="2" y="0" width="2" height="9" fill="#a0a0a0"/></svg>
<svg style="left:501px;top:49px" width="10" height="11" viewBox="0 0 10 11" shape-rendering="crispEdges"><rect x="2" y="0" width="2" height="10.6" fill="#a0a0a0"/><rect x="6" y="0" width="2" height="10.6" fill="#a0a0a0"/><rect x="0" y="3" width="9.4" height="1.1" fill="#a0a0a0"/><rect x="0" y="7" width="9.4" height="1.1" fill="#a0a0a0"/></svg>
<span class="t" style="left:525.5px;top:48.6px;font-size:12.6px;line-height:12.6px;color:#a0a0a0;-webkit-text-stroke:0.45px #a0a0a0;transform:scaleX(0.8);transform-origin:0 0">S</span>
<span class="t" style="left:548.6px;top:48.6px;font-size:12.6px;line-height:12.6px;color:#a0a0a0;-webkit-text-stroke:0.45px #a0a0a0;transform:scaleX(0.8);transform-origin:0 0">A</span>
<span class="t" style="left:571px;top:48.6px;font-size:12.6px;line-height:12.6px;color:#a0a0a0;-webkit-text-stroke:0.45px #a0a0a0;transform:scaleX(0.95);transform-origin:0 0">Z</span>
<svg style="left:599px;top:49px" width="14" height="11" viewBox="0 0 14 11"><path d="M1 10.5 L12.5 0.5" stroke="#a0a0a0" stroke-width="1.5"/><ellipse cx="3.2" cy="2.5" rx="2.4" ry="1.9" fill="none" stroke="#a0a0a0" stroke-width="1.4"/><ellipse cx="10.6" cy="8.3" rx="2.4" ry="1.9" fill="none" stroke="#a0a0a0" stroke-width="1.4"/></svg>
<svg style="left:621px;top:48px" width="12" height="14" viewBox="0 0 12 14" shape-rendering="crispEdges"><rect x="1" y="0" width="1" height="1" fill="#a4a4a4"/><rect x="5" y="0" width="1" height="1" fill="#a4a4a4"/><rect x="9" y="0" width="1" height="1" fill="#a4a4a4"/><rect x="0" y="1" width="2" height="1" fill="#a4a4a4"/><rect x="4" y="1" width="2" height="1" fill="#a4a4a4"/><rect x="8" y="1" width="2" height="1" fill="#a4a4a4"/><rect x="1" y="2" width="1" height="1" fill="#a4a4a4"/><rect x="5" y="2" width="1" height="1" fill="#a4a4a4"/><rect x="9" y="2" width="1" height="1" fill="#a4a4a4"/><rect x="1" y="3" width="1" height="1" fill="#a4a4a4"/><rect x="5" y="3" width="1" height="1" fill="#a4a4a4"/><rect x="9" y="3" width="1" height="1" fill="#a4a4a4"/><rect x="1" y="4" width="1" height="1" fill="#a4a4a4"/><rect x="3" y="4" width="1" height="1" fill="#a4a4a4"/><rect x="5" y="4" width="1" height="1" fill="#a4a4a4"/><rect x="7" y="4" width="1" height="1" fill="#a4a4a4"/><rect x="9" y="4" width="1" height="1" fill="#a4a4a4"/><rect x="1" y="7" width="1" height="1" fill="#a4a4a4"/><rect x="5" y="7" width="1" height="1" fill="#a4a4a4"/><rect x="8" y="7" width="2" height="1" fill="#a4a4a4"/><rect x="0" y="8" width="2" height="1" fill="#a4a4a4"/><rect x="4" y="8" width="2" height="1" fill="#a4a4a4"/><rect x="10" y="8" width="1" height="1" fill="#a4a4a4"/><rect x="1" y="9" width="1" height="1" fill="#a4a4a4"/><rect x="5" y="9" width="1" height="1" fill="#a4a4a4"/><rect x="9" y="9" width="1" height="1" fill="#a4a4a4"/><rect x="1" y="10" width="1" height="1" fill="#a4a4a4"/><rect x="5" y="10" width="1" height="1" fill="#a4a4a4"/><rect x="8" y="10" width="1" height="1" fill="#a4a4a4"/><rect x="1" y="11" width="1" height="1" fill="#a4a4a4"/><rect x="3" y="11" width="1" height="1" fill="#a4a4a4"/><rect x="5" y="11" width="1" height="1" fill="#a4a4a4"/><rect x="7" y="11" width="4" height="1" fill="#a4a4a4"/><rect x="0" y="13" width="1" height="1" fill="#a4a4a4"/><rect x="2" y="13" width="1" height="1" fill="#a4a4a4"/><rect x="4" y="13" width="1" height="1" fill="#a4a4a4"/></svg>
<span class="t" style="left:644.6px;top:47.6px;font-size:12px;line-height:12px;color:#b8b8b8;-webkit-text-stroke:0.3px #b8b8b8;">€</span>
<span class="t" style="left:652.6px;top:51.2px;font-size:11px;line-height:11px;color:#b8b8b8;-webkit-text-stroke:0.2px #b8b8b8;transform:scaleX(.9);transform-origin:0 0">$</span>
<svg style="left:675px;top:48px" width="17" height="14" viewBox="0 0 17 14"><path d="M15.6 0.6 L9.6 6.4 M13.2 0.6 L8.4 5.2 M13 0.6 H15.8 V3" fill="none" stroke="#000" stroke-width="1.1"/><path d="M6.2 6.6 L1.4 10.6 M7.6 8 L5.6 10" fill="none" stroke="#000" stroke-width="1.1"/><rect x="0.8" y="10.2" width="8" height="2.2" fill="#b0b0b0" stroke="#000" stroke-width="1"/><path d="M0.4 0.6 H3.8 L14.8 10.4 L12 11.8 L0.4 2.6 Z" fill="#00e0e8" stroke="#000" stroke-width="1"/><path d="M2 1.6 L12.6 10.6" stroke="#00a8b0" stroke-width=".8"/><rect x="10.2" y="9.8" width="5.4" height="3" fill="#00b8c0" stroke="#000" stroke-width="1"/></svg>
<svg style="left:708px;top:47px" width="13" height="15" viewBox="0 0 13 15"><path d="M4.6 3.6 Q3.9 0.6 7 0.6 Q10.1 0.6 9.4 3.6 Q9.2 4.6 8.6 5 H11.2 Q11.6 5 11.6 5.6 V13.6 Q11.6 14.5 10.8 14.5 H1.4 Q0.6 14.5 0.6 13.6 V12.2 H2.2 Q3.2 12.6 4.2 12.2 Q5.4 11.4 5.2 10.2 Q5 8.8 3.6 8.6 Q2.8 8.6 2.2 9 H0.6 V5.8 Q0.6 5 1.4 5 H5.4 Q4.8 4.6 4.6 3.6 Z" fill="#0000f0" stroke="#000" stroke-width="1.2"/><path d="M0.2 9.9 H2.6 Q3.6 9.4 4 10.2 Q4.3 11 3.6 11.4 Q3 11.6 2.6 11.3 H0.2 Z" fill="#f0f0f0"/></svg>
<svg style="left:731px;top:47px" width="13" height="15" viewBox="0 0 13 15"><path d="M4.6 3.6 Q3.9 0.6 7 0.6 Q10.1 0.6 9.4 3.6 Q9.2 4.6 8.6 5 H11.2 Q11.6 5 11.6 5.6 V13.6 Q11.6 14.5 10.8 14.5 H1.4 Q0.6 14.5 0.6 13.6 V12.2 H2.2 Q3.2 12.6 4.2 12.2 Q5.4 11.4 5.2 10.2 Q5 8.8 3.6 8.6 Q2.8 8.6 2.2 9 H0.6 V5.8 Q0.6 5 1.4 5 H5.4 Q4.8 4.6 4.6 3.6 Z" fill="#ffff00" stroke="#000" stroke-width="1.2"/><path d="M0.2 9.9 H2.6 Q3.6 9.4 4 10.2 Q4.3 11 3.6 11.4 Q3 11.6 2.6 11.3 H0.2 Z" fill="#f0f0f0"/></svg>
<svg style="left:754px;top:47px" width="13" height="15" viewBox="0 0 13 15"><path d="M4.6 3.6 Q3.9 0.6 7 0.6 Q10.1 0.6 9.4 3.6 Q9.2 4.6 8.6 5 H11.2 Q11.6 5 11.6 5.6 V13.6 Q11.6 14.5 10.8 14.5 H1.4 Q0.6 14.5 0.6 13.6 V12.2 H2.2 Q3.2 12.6 4.2 12.2 Q5.4 11.4 5.2 10.2 Q5 8.8 3.6 8.6 Q2.8 8.6 2.2 9 H0.6 V5.8 Q0.6 5 1.4 5 H5.4 Q4.8 4.6 4.6 3.6 Z" fill="#f00000" stroke="#000" stroke-width="1.2"/><path d="M0.2 9.9 H2.6 Q3.6 9.4 4 10.2 Q4.3 11 3.6 11.4 Q3 11.6 2.6 11.3 H0.2 Z" fill="#f0f0f0"/></svg>
<svg style="left:115px;top:275px" width="24" height="20" viewBox="0 0 24 20"><path d="M4.2 3.5 H15.2 L11.2 7.7 V11.0 H8.5 V7.7 Z" fill="#e8f4f4" stroke="#000" stroke-width="1.1"/><path d="M6.4 4.8 L8.8 7.3 M9.4 8.0 V10.1" stroke="#20a0a0" stroke-width=".9" fill="none"/><path d="M17.5 5.8 L12.6 11.3 H15.4 L11.8 16.8 L19.8 10 H16.6 L19.6 6.6 Z" fill="#000"/><path d="M16.6 5.4 L11.6 10.8 H14.5 L10.9 16.3 L18.8 9.6 H15.6 L18.6 6 Z" fill="#ffee00"/></svg>
<svg style="left:141px;top:275px" width="24" height="20" viewBox="0 0 24 20"><path d="M4.2 3.5 H15.2 L11.2 7.7 V11.0 H8.5 V7.7 Z" fill="#e8f4f4" stroke="#000" stroke-width="1.1"/><path d="M6.4 4.8 L8.8 7.3 M9.4 8.0 V10.1" stroke="#20a0a0" stroke-width=".9" fill="none"/><rect x="10.6" y="8" width="8" height="9.5" fill="#fff" stroke="#000" stroke-width="1.1"/><rect x="10" y="7.2" width="9.2" height="2" fill="#0000f0"/><path d="M12.3 12 H15.8 M12.3 14.5 H16.8" stroke="#000" stroke-width="1.1"/></svg>
<svg style="left:167px;top:275px" width="24" height="20" viewBox="0 0 24 20"><path d="M4.2 3.5 H15.2 L11.2 7.7 V11.0 H8.5 V7.7 Z" fill="#e8f4f4" stroke="#000" stroke-width="1.1"/><path d="M6.4 4.8 L8.8 7.3 M9.4 8.0 V10.1" stroke="#20a0a0" stroke-width=".9" fill="none"/><path d="M9.2 7 Q13 10 18.6 16.2 M18.4 6 Q13.5 9.5 10.2 16.6" fill="none" stroke="#800000" stroke-width="1.9"/></svg>
</div></body></html>
